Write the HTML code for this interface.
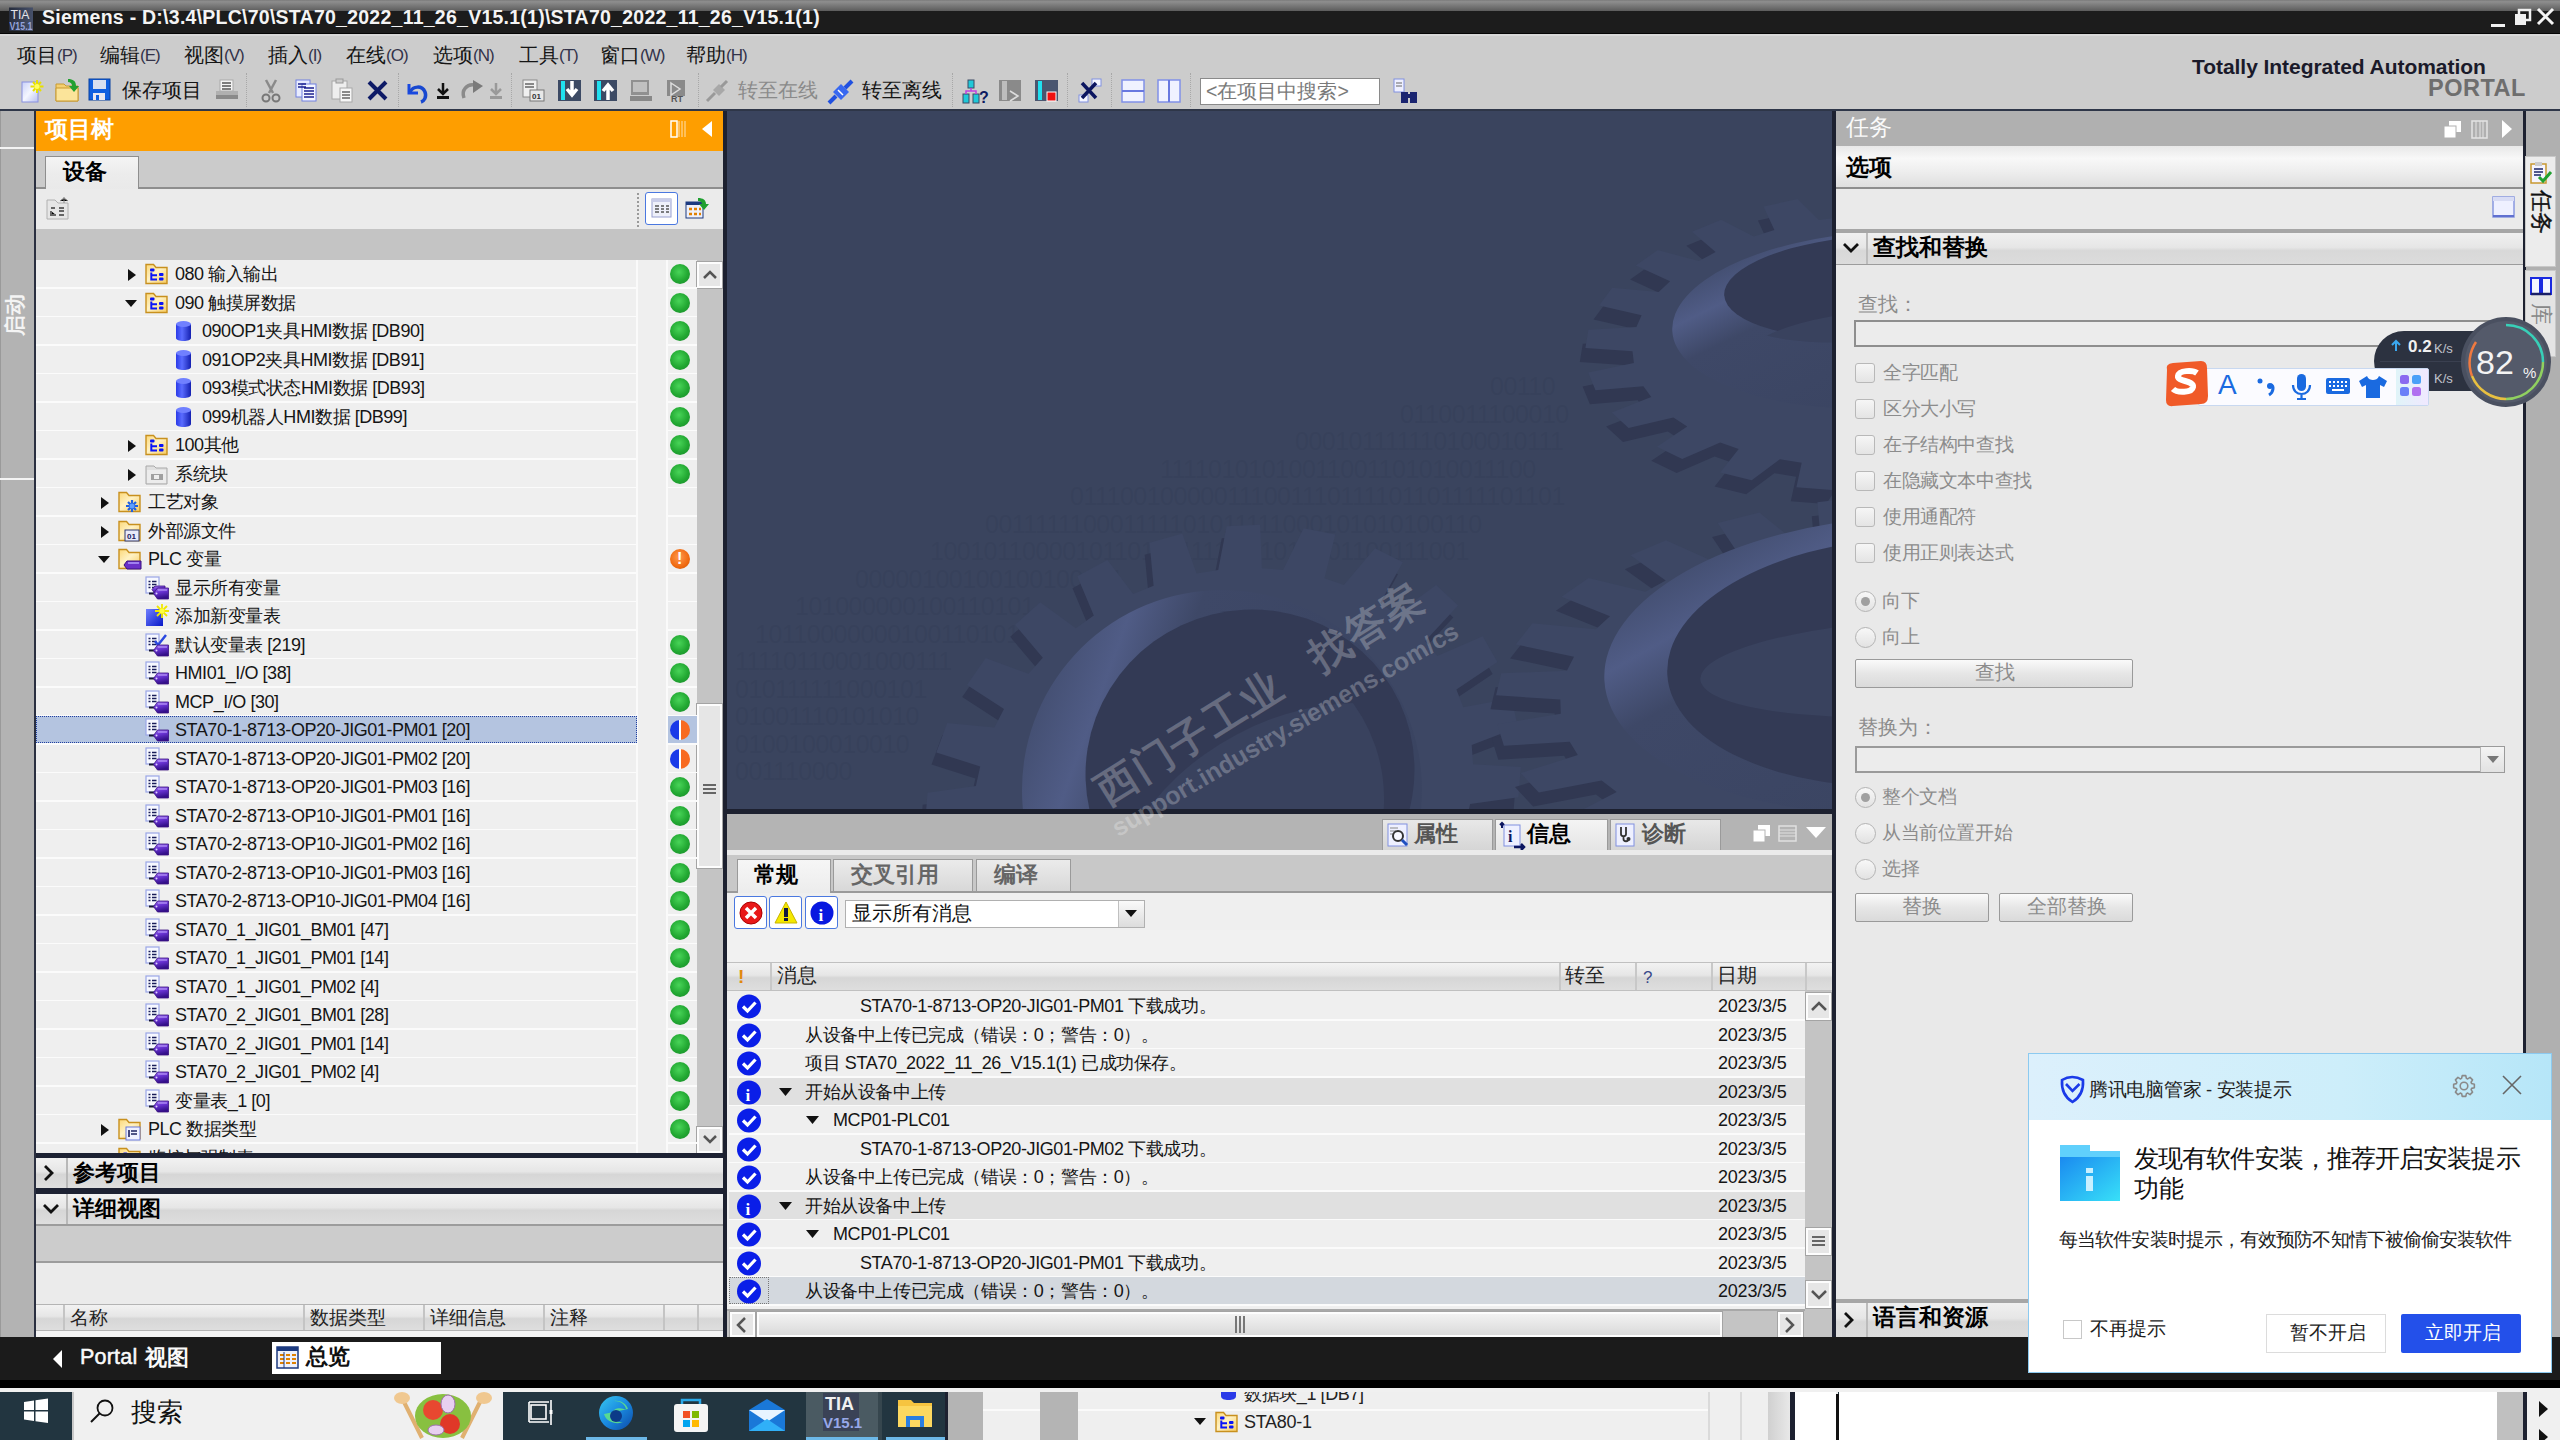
<!DOCTYPE html>
<html><head><meta charset="utf-8"><style>
*{box-sizing:border-box;margin:0;padding:0}
html,body{width:2560px;height:1440px;overflow:hidden;background:#cccccc;font-family:"Liberation Sans",sans-serif;color:#000}
.a{position:absolute}
.t{position:absolute;white-space:nowrap;line-height:1}
svg{position:absolute;overflow:visible}
.sep{position:absolute;width:0;border-left:1.5px dotted #a8a8a8;top:73px;height:34px}
.mi{position:absolute;white-space:nowrap;line-height:1;font-size:20px;color:#151515;top:45px}
.mi i{font-style:normal;color:#33334a;font-size:17px;letter-spacing:-1px;position:relative;top:-1px}
.row{position:absolute;left:36px;width:601px;height:28.5px}
.tt{position:absolute;font-size:19.5px;white-space:nowrap;line-height:1;color:#151515}
.dot{position:absolute;width:20px;height:20px;border-radius:50%;background:radial-gradient(circle at 45% 40%,#48d458,#22a832 55%,#16862a)}
.hdr{position:absolute;background:linear-gradient(#f2f2f2,#e6e6e6 45%,#d6d6d6 55%,#dedede)}
.cb{position:absolute;width:20px;height:20px;border:1.5px solid #b8b8b8;border-radius:3px;background:linear-gradient(#f6f6f6,#e4e4e4)}
.rb{position:absolute;width:21px;height:21px;border:1.5px solid #b4b4b4;border-radius:50%;background:linear-gradient(#f8f8f8,#e2e2e2)}
.gl{position:absolute;white-space:nowrap;line-height:1;font-size:18.5px;letter-spacing:-0.4px;color:#8c8c8c}
.btn{position:absolute;border:1.5px solid #9a9a9a;border-radius:2px;background:linear-gradient(#fafafa,#e6e6e6 50%,#dadada);}
.msg{position:absolute;left:730px;width:1075px;height:28.5px}
.mt{position:absolute;font-size:19.5px;white-space:nowrap;line-height:1;color:#151515}
.chk{position:absolute;left:737px;width:24px;height:24px;border-radius:50%;background:radial-gradient(circle at 40% 35%,#3a5cff,#0a1ee0 60%,#0812a8)}
.date{position:absolute;left:1718px;font-size:19.5px;line-height:1;color:#151515}
</style></head><body>
<div class="a" style="left:0px;top:0px;width:2560px;height:11px;background:linear-gradient(#7a7a7a,#8e8e8e 15%,#5c5c5c);"></div>
<div class="a" style="left:0px;top:11px;width:2560px;height:23px;background:#1c1c1c;"></div>
<div class="a" style="left:0px;top:33px;width:2560px;height:1px;background:#050505;"></div>
<svg style="left:9px;top:7px" width="24" height="24"><defs><linearGradient id="tiag" x1="0" y1="0" x2="1" y2="0"><stop offset="0" stop-color="#262c3c"/><stop offset="1" stop-color="#46506a"/></linearGradient></defs><rect x="0" y="0.5" width="24" height="23.5" fill="url(#tiag)"/><text x="1.5" y="12" font-size="12.5" fill="#e4e4e8" font-family="Liberation Sans" textLength="19" lengthAdjust="spacingAndGlyphs">TIA</text><text x="0.5" y="22.5" font-size="11" font-weight="bold" fill="#96a4dc" font-family="Liberation Sans" textLength="23" lengthAdjust="spacingAndGlyphs">V15.1</text></svg>
<div class="t" style="left:42px;top:8px;font-size:19.5px;color:#f4f4f4;font-weight:bold;letter-spacing:0.25px">Siemens - D:\3.4\PLC\70\STA70_2022_11_26_V15.1(1)\STA70_2022_11_26_V15.1(1)</div>
<div class="a" style="left:2491px;top:24px;width:14px;height:3px;background:#f0f0f0;"></div>
<svg style="left:2514px;top:9px" width="18" height="18"><rect x="5" y="1" width="11" height="10" fill="none" stroke="#f0f0f0" stroke-width="2.5"/><rect x="1" y="5" width="11" height="11" fill="#f0f0f0"/></svg>
<svg style="left:2537px;top:8px" width="18" height="18"><path d="M1 1L16 16M16 1L1 16" stroke="#f4f4f4" stroke-width="3"/></svg>
<div class="a" style="left:0px;top:34px;width:2560px;height:75px;background:#cccccc;"></div>
<div class="a" style="left:0px;top:34px;width:2560px;height:2px;background:#d8d8d8;"></div>
<div class="a" style="left:0px;top:109px;width:2560px;height:2px;background:#2e3648;"></div>
<div class="mi" style="left:17px">项目<i>(P)</i></div>
<div class="mi" style="left:100px">编辑<i>(E)</i></div>
<div class="mi" style="left:184px">视图<i>(V)</i></div>
<div class="mi" style="left:268px">插入<i>(I)</i></div>
<div class="mi" style="left:346px">在线<i>(O)</i></div>
<div class="mi" style="left:433px">选项<i>(N)</i></div>
<div class="mi" style="left:519px">工具<i>(T)</i></div>
<div class="mi" style="left:600px">窗口<i>(W)</i></div>
<div class="mi" style="left:686px">帮助<i>(H)</i></div>
<div class="sep" style="left:246px"></div>
<div class="sep" style="left:398px"></div>
<div class="sep" style="left:511px"></div>
<div class="sep" style="left:698px"></div>
<div class="sep" style="left:952px"></div>
<div class="sep" style="left:1067px"></div>
<div class="sep" style="left:1111px"></div>
<div class="sep" style="left:1190px"></div>
<svg style="left:20px;top:78px" width="26" height="26" viewBox="0 0 26 26"><defs><linearGradient id="pg" x1="0" y1="0" x2="1" y2="1"><stop offset="0" stop-color="#c8d0f8"/><stop offset="0.5" stop-color="#f4f6ff"/><stop offset="1" stop-color="#b8c0f0"/></linearGradient></defs><rect x="2" y="4" width="16" height="20" fill="url(#pg)" stroke="#8890e0" stroke-width="1"/><g stroke="#e8e000" stroke-width="2"><path d="M17 2v13M10.5 8.5h13M13 4l8 9M21 4l-8 9"/></g><circle cx="17" cy="8.5" r="2.5" fill="#ffff60"/></svg>
<svg style="left:55px;top:78px" width="26" height="26" viewBox="0 0 26 26"><path d="M1 6h8l2 2h12v15H1z" fill="#f4d070" stroke="#c89a30"/><path d="M1 10h22v13H1z" fill="#fbe49a" stroke="#c89a30"/><path d="M13 1c5 0 8 2 8 7h3l-5 6-5-6h3c0-3-2-4-4-4z" fill="#22a030"/></svg>
<svg style="left:88px;top:78px" width="24" height="24" viewBox="0 0 24 24"><rect x="1" y="1" width="21" height="21" fill="#1060e0" stroke="#0840a0"/><rect x="5" y="2" width="13" height="9" fill="#d8e0f0"/><rect x="5" y="15" width="12" height="7" fill="#e8e8f0"/><rect x="8" y="17" width="3" height="5" fill="#1060e0"/></svg>
<div class="t" style="left:122px;top:80px;font-size:20px;color:#151515;">保存项目</div>
<svg style="left:214px;top:78px" width="26" height="26" viewBox="0 0 26 26"><rect x="6" y="2" width="13" height="11" fill="#f4f4f4" stroke="#aaa"/><path d="M8 5h9M8 8h9M8 11h9" stroke="#555" stroke-width="1.5"/><path d="M2 13h22v8H2z" fill="#8a8a8a"/><rect x="2" y="13" width="22" height="4" fill="#b0b0b0"/></svg>
<svg style="left:258px;top:78px" width="26" height="26" viewBox="0 0 26 26"><path d="M8 2l7 13M18 2l-7 13" stroke="#8a8a8a" stroke-width="2.5"/><circle cx="8" cy="20" r="3.5" fill="none" stroke="#777" stroke-width="2"/><circle cx="18" cy="20" r="3.5" fill="none" stroke="#777" stroke-width="2"/></svg>
<svg style="left:294px;top:78px" width="26" height="26" viewBox="0 0 26 26"><rect x="2" y="2" width="14" height="17" fill="#e8ecff" stroke="#7080e0"/><rect x="8" y="6" width="14" height="17" fill="#f4f6ff" stroke="#7080e0"/><path d="M4 6h8M4 9h8M10 10h10M10 13h10M10 16h10M10 19h10" stroke="#1a2090" stroke-width="1.5"/></svg>
<svg style="left:330px;top:78px" width="26" height="26" viewBox="0 0 26 26"><rect x="2" y="3" width="15" height="18" fill="#eeeeee" stroke="#a8a8a8"/><rect x="6" y="1" width="7" height="4" fill="#ccc" stroke="#999"/><rect x="10" y="10" width="12" height="14" fill="#f6f6f6" stroke="#a8a8a8"/><path d="M12 14h8M12 17h8M12 20h8" stroke="#666" stroke-width="1.5"/></svg>
<svg style="left:366px;top:78px" width="24" height="24" viewBox="0 0 24 24"><path d="M3 4L20 21M20 4L3 21" stroke="#0d1a66" stroke-width="4"/></svg>
<svg style="left:404px;top:78px" width="28" height="28" viewBox="0 0 28 28"><path d="M5 6v9h9" fill="none" stroke="#1848e0" stroke-width="3"/><path d="M6 14c3-6 12-7 15 0c2 5-1 9-4 10" fill="none" stroke="#1848d0" stroke-width="3.5"/></svg>
<svg style="left:436px;top:82px" width="14" height="20" viewBox="0 0 14 20"><path d="M7 1v10M2 7l5 5 5-5" stroke="#111" stroke-width="2.5" fill="none"/><rect x="1" y="14" width="12" height="3" fill="#111"/></svg>
<svg style="left:460px;top:78px" width="26" height="26" viewBox="0 0 26 26"><path d="M4 20c-3-8 3-14 10-13" fill="none" stroke="#8a8a8a" stroke-width="3.5"/><path d="M13 2l10 6-10 7z" fill="#7a7a7a"/></svg>
<svg style="left:489px;top:82px" width="14" height="20" viewBox="0 0 14 20"><path d="M7 1v10M2 7l5 5 5-5" stroke="#999" stroke-width="2.5" fill="none"/><rect x="1" y="14" width="12" height="3" fill="#999"/></svg>
<svg style="left:521px;top:78px" width="26" height="26" viewBox="0 0 26 26"><rect x="2" y="2" width="14" height="17" fill="#f0f0f0" stroke="#8a8a8a"/><path d="M4 6h9M4 9h9" stroke="#666" stroke-width="1.5"/><rect x="9" y="12" width="14" height="11" fill="#e8e8e8" stroke="#777"/><text x="11" y="21" font-size="8" font-weight="bold" fill="#333">01</text></svg>
<svg style="left:557px;top:78px" width="26" height="26" viewBox="0 0 26 26"><rect x="1" y="2" width="23" height="21" fill="#3c4a64"/><rect x="4" y="3" width="4" height="19" fill="#20e0f0"/><path d="M15 3v12M10 11l5 6 5-6" stroke="#fff" stroke-width="3.5" fill="none"/></svg>
<svg style="left:593px;top:78px" width="26" height="26" viewBox="0 0 26 26"><rect x="1" y="2" width="23" height="21" fill="#3c4a64"/><rect x="4" y="3" width="4" height="19" fill="#20e0f0"/><path d="M15 22V9M10 13l5-6 5 6" stroke="#fff" stroke-width="3.5" fill="none"/></svg>
<svg style="left:629px;top:78px" width="26" height="26" viewBox="0 0 26 26"><rect x="2" y="2" width="18" height="15" fill="#909090"/><rect x="4" y="4" width="14" height="10" fill="#c0c0c0"/><rect x="1" y="18" width="22" height="5" fill="#888"/></svg>
<svg style="left:665px;top:78px" width="26" height="26" viewBox="0 0 26 26"><rect x="2" y="2" width="18" height="16" fill="#8a8a8a"/><path d="M6 5l9 6-9 6z" fill="none" stroke="#ddd" stroke-width="1.5"/><text x="6" y="24" font-size="9" font-weight="bold" fill="#555">RT</text></svg>
<svg style="left:704px;top:78px" width="26" height="26" viewBox="0 0 26 26"><path d="M3 23l8-8" stroke="#999" stroke-width="3"/><path d="M9 12l6-6 6 6-6 6z" fill="#a8a8a8"/><path d="M17 9l6-6" stroke="#999" stroke-width="3"/></svg>
<div class="t" style="left:738px;top:80px;font-size:20px;color:#8a8a8a;">转至在线</div>
<svg style="left:827px;top:78px" width="28" height="28" viewBox="0 0 28 28"><path d="M2 25l7-7" stroke="#2050e0" stroke-width="4"/><path d="M6 14l8-8 8 8-8 8z" fill="#3868f0"/><path d="M18 10l7-7" stroke="#2050e0" stroke-width="4"/><path d="M11 12l5 5" stroke="#fff" stroke-width="1.5"/></svg>
<div class="t" style="left:862px;top:80px;font-size:20px;color:#151515;">转至离线</div>
<svg style="left:962px;top:79px" width="28" height="26" viewBox="0 0 28 26"><rect x="6" y="1" width="6" height="8" fill="#20c8d8" stroke="#3c4a64"/><rect x="1" y="15" width="6" height="9" fill="#20c8d8" stroke="#3c4a64"/><rect x="11" y="15" width="6" height="9" fill="#20c8d8" stroke="#3c4a64"/><path d="M9 9v3M4 15v-3h10v3" stroke="#c040e0" stroke-width="1.5" fill="none"/><text x="17" y="24" font-size="16" font-weight="bold" fill="#0c1a60">?</text></svg>
<svg style="left:998px;top:78px" width="26" height="26" viewBox="0 0 26 26"><rect x="1" y="2" width="22" height="21" fill="#8a8a8a"/><rect x="4" y="3" width="5" height="19" fill="#bdbdbd"/><path d="M12 13l8 5-8 5" fill="none" stroke="#ddd" stroke-width="1.5"/></svg>
<svg style="left:1034px;top:78px" width="26" height="26" viewBox="0 0 26 26"><rect x="1" y="2" width="23" height="21" fill="#4a5670"/><rect x="4" y="3" width="4" height="19" fill="#20e0f0"/><rect x="13" y="14" width="9" height="9" fill="#f01010" stroke="#fff"/></svg>
<svg style="left:1078px;top:78px" width="26" height="26" viewBox="0 0 26 26"><rect x="14" y="1" width="9" height="7" fill="#f4f6ff" stroke="#8090e0"/><rect x="1" y="17" width="9" height="7" fill="#f4f6ff" stroke="#8090e0"/><path d="M4 5l14 15M18 5L4 20" stroke="#0c1660" stroke-width="3.5"/></svg>
<svg style="left:1121px;top:79px" width="26" height="24" viewBox="0 0 26 24"><rect x="1" y="1" width="22" height="22" fill="#f0f2ff" stroke="#8090e8" stroke-width="1.5"/><path d="M1 12h22" stroke="#6878e0" stroke-width="2"/></svg>
<svg style="left:1157px;top:79px" width="26" height="24" viewBox="0 0 26 24"><rect x="1" y="1" width="22" height="22" fill="#f0f2ff" stroke="#8090e8" stroke-width="1.5"/><path d="M12 1v22" stroke="#6878e0" stroke-width="2"/></svg>
<div class="a" style="left:1200px;top:78px;width:180px;height:27px;background:#ffffff;border:1.5px solid #8a8a8a"></div>
<div class="t" style="left:1206px;top:82px;font-size:19.5px;color:#7a7a7a;">&lt;在项目中搜索&gt;</div>
<svg style="left:1393px;top:78px" width="28" height="28" viewBox="0 0 28 28"><rect x="1" y="1" width="10" height="13" fill="#eef0ff" stroke="#8090e0"/><path d="M3 5h6M3 8h6" stroke="#666"/><rect x="8" y="14" width="7" height="11" fill="#1a2470"/><rect x="17" y="14" width="7" height="11" fill="#1a2470"/><rect x="13" y="16" width="6" height="4" fill="#1a2470"/></svg>
<div class="t" style="left:2192px;top:56px;font-size:21px;color:#1a1a2a;font-weight:bold;letter-spacing:-0.05px">Totally Integrated Automation</div>
<div class="t" style="left:2428px;top:77px;font-size:23.5px;color:#6e6e6e;font-weight:bold;letter-spacing:0.5px">PORTAL</div>
<div class="a" style="left:0px;top:111px;width:34px;height:1226px;background:#b3b3b3;"></div>
<div class="a" style="left:0px;top:111px;width:1px;height:1226px;background:#9a9a9a;"></div>
<div class="a" style="left:34px;top:111px;width:2px;height:1226px;background:#2a2f40;"></div>
<div class="a" style="left:0px;top:147px;width:34px;height:2px;background:#f4f4f4;"></div>
<div class="a" style="left:0px;top:478px;width:34px;height:2px;background:#f4f4f4;"></div>
<div class="t" style="left:-9px;top:305px;font-size:21px;font-weight:bold;color:#f4f4f4;transform:rotate(-90deg);transform-origin:23px 10px;width:46px;height:21px;text-align:center">启动</div>
<div class="a" style="left:36px;top:111px;width:687px;height:40px;background:#fe9e00;"></div>
<div class="t" style="left:45px;top:119px;font-size:22.5px;color:#ffffff;font-weight:bold">项目树</div>
<svg style="left:670px;top:120px" width="16" height="18" viewBox="0 0 16 18"><rect x="1" y="1" width="6" height="16" fill="none" stroke="#fff" stroke-width="1.5"/><path d="M9 1v16M12 1v16M15 1v16" stroke="#ffe0b0" stroke-width="1"/></svg>
<svg style="left:700px;top:120px" width="14" height="18" viewBox="0 0 14 18"><path d="M12 1L2 9l10 8z" fill="#fff"/></svg>
<div class="a" style="left:36px;top:151px;width:687px;height:37px;background:#cbcbcb;"></div>
<div class="a" style="left:36px;top:187px;width:687px;height:2px;background:#8e8e8e;"></div>
<div class="a" style="left:45px;top:156px;width:94px;height:34px;border:1.5px solid #8e8e8e;border-bottom:none;background:linear-gradient(#f4f4f4,#ececec 50%,#e9e9e9)"></div>
<div class="t" style="left:63px;top:161px;font-size:22px;color:#000;font-weight:bold">设备</div>
<div class="a" style="left:36px;top:189px;width:687px;height:40px;background:#ebebeb;"></div>
<svg style="left:46px;top:196px" width="26" height="26" viewBox="0 0 26 26"><path d="M1 4h8l3 3h10v16H1z" fill="#e6e6e6" stroke="#b0b0b0"/><path d="M5 12h4M5 15v4h5M13 19h5M13 12h5M13 15h5" stroke="#666" stroke-width="2"/><path d="M18 1v6M14 5l4-3 4 3" stroke="#888" stroke-width="1"/></svg>
<div class="a" style="left:637px;top:193px;width:0;height:34px;border-left:2px dotted #9a9a9a"></div>
<div class="a" style="left:645px;top:192px;width:33px;height:33px;border:1.5px solid #4a78e0;border-radius:3px;background:#fff"></div>
<svg style="left:651px;top:198px" width="22" height="22" viewBox="0 0 22 22"><rect x="1" y="1" width="19" height="18" fill="#eef0fa" stroke="#98a0d0"/><rect x="1" y="1" width="19" height="3" fill="#c8cce8"/><path d="M4 8h4M10 8h3M15 8h3M4 11h4M10 11h3M15 11h3M4 14h4M10 14h3M15 14h3" stroke="#555" stroke-width="1.6"/></svg>
<svg style="left:685px;top:196px" width="26" height="26" viewBox="0 0 26 26"><rect x="1" y="6" width="17" height="16" fill="#eef0fa" stroke="#1c3a80"/><rect x="1" y="6" width="17" height="3" fill="#1c3a80"/><path d="M4 13h3M9 13h3M14 13h2M4 18h3M9 18h3M14 18h2" stroke="#e08000" stroke-width="2.5"/><path d="M13 2c5 0 8 2 8 6h3l-5 6-5-6h3c0-2-2-3-4-3z" fill="#20a030"/></svg>
<div class="a" style="left:36px;top:229px;width:687px;height:31px;background:#c4c4c4;"></div>
<div class="a" style="left:36px;top:260px;width:661px;height:893px;background:#efefef;"></div>
<div class="a" style="left:636px;top:260px;width:2px;height:893px;background:#fafafa;"></div>
<div class="a" style="left:666px;top:260px;width:2px;height:893px;background:#fafafa;"></div>
<div class="a" style="left:697px;top:260px;width:26px;height:893px;background:#c4c4c4;"></div>
<div class="a" style="left:697px;top:262px;width:25px;height:26px;border:2px solid #fdfdfd;box-shadow:0 0 0 1px #a4a4a4;background:#e6e6e6"></div>
<svg style="left:702px;top:268px" width="16" height="12" viewBox="0 0 16 12"><path d="M2 10l6-6 6 6" fill="none" stroke="#555" stroke-width="2.5"/></svg>
<div class="a" style="left:697px;top:704px;width:25px;height:164px;border:2px solid #fdfdfd;box-shadow:0 0 0 1px #a4a4a4;background:#e6e6e6"></div>
<div class="a" style="left:703px;top:784px;width:13px;height:2px;background:#666;"></div>
<div class="a" style="left:703px;top:788px;width:13px;height:2px;background:#666;"></div>
<div class="a" style="left:703px;top:792px;width:13px;height:2px;background:#666;"></div>
<div class="a" style="left:697px;top:1127px;width:25px;height:26px;border:2px solid #fdfdfd;box-shadow:0 0 0 1px #a4a4a4;background:#e6e6e6"></div>
<svg style="left:702px;top:1134px" width="16" height="12" viewBox="0 0 16 12"><path d="M2 2l6 6 6-6" fill="none" stroke="#555" stroke-width="2.5"/></svg>
<div class="a" style="left:36px;top:260px;width:661px;height:893px;overflow:hidden">
<div class="a" style="left:0;top:27.0px;width:600px;height:1.5px;background:#fbfbfb"></div>
<div class="a" style="left:632px;top:27.0px;width:29px;height:1.5px;background:#fbfbfb"></div>
<svg style="left:91px;top:8.0px" width="10" height="14"><path d="M1 1l8 6-8 6z" fill="#111"/></svg>
<svg style="left:109px;top:3.0px" width="24" height="22"><defs><linearGradient id="fdg" x1="0" y1="0" x2="1" y2="1"><stop offset="0" stop-color="#fcd878"/><stop offset="0.45" stop-color="#fff2c4"/><stop offset="1" stop-color="#f8cc60"/></linearGradient></defs><path d="M1 1.5h7.5l2.5 3h11v16H1z" fill="url(#fdg)" stroke="#c8901e" stroke-width="1.4"/><rect x="5" y="5.5" width="4.5" height="3" rx="1" fill="#0a14f8"/><path d="M6.3 9.5V16.5H12M6.3 12.3H12" fill="none" stroke="#0a14f8" stroke-width="2"/><rect x="14" y="10" width="4.5" height="3" rx="1" fill="#0a14f8"/><rect x="14" y="14.5" width="4.5" height="3" rx="1" fill="#0a14f8"/></svg>
<div class="tt" style="left:139px;top:5.0px;font-size:18px;letter-spacing:-0.45px">080 输入输出</div>
<div class="dot" style="left:634px;top:4.0px"></div>
<div class="a" style="left:0;top:55.5px;width:600px;height:1.5px;background:#fbfbfb"></div>
<div class="a" style="left:632px;top:55.5px;width:29px;height:1.5px;background:#fbfbfb"></div>
<svg style="left:88px;top:38.5px" width="14" height="10"><path d="M1 1h12l-6 7z" fill="#111"/></svg>
<svg style="left:109px;top:31.5px" width="24" height="22"><defs><linearGradient id="fdg" x1="0" y1="0" x2="1" y2="1"><stop offset="0" stop-color="#fcd878"/><stop offset="0.45" stop-color="#fff2c4"/><stop offset="1" stop-color="#f8cc60"/></linearGradient></defs><path d="M1 1.5h7.5l2.5 3h11v16H1z" fill="url(#fdg)" stroke="#c8901e" stroke-width="1.4"/><rect x="5" y="5.5" width="4.5" height="3" rx="1" fill="#0a14f8"/><path d="M6.3 9.5V16.5H12M6.3 12.3H12" fill="none" stroke="#0a14f8" stroke-width="2"/><rect x="14" y="10" width="4.5" height="3" rx="1" fill="#0a14f8"/><rect x="14" y="14.5" width="4.5" height="3" rx="1" fill="#0a14f8"/></svg>
<div class="tt" style="left:139px;top:33.5px;font-size:18px;letter-spacing:-0.45px">090 触摸屏数据</div>
<div class="dot" style="left:634px;top:32.5px"></div>
<div class="a" style="left:0;top:84.0px;width:600px;height:1.5px;background:#fbfbfb"></div>
<div class="a" style="left:632px;top:84.0px;width:29px;height:1.5px;background:#fbfbfb"></div>
<svg style="left:139px;top:60.0px" width="18" height="22"><defs><linearGradient id="dbg" x1="0" x2="1"><stop offset="0" stop-color="#2a3ae8"/><stop offset="0.4" stop-color="#5a6cff"/><stop offset="1" stop-color="#1420b0"/></linearGradient></defs><path d="M1 4v14c0 2 3.5 3 7.5 3s7.5-1 7.5-3V4z" fill="url(#dbg)"/><ellipse cx="8.5" cy="4" rx="7.5" ry="3" fill="#7080ff"/></svg>
<div class="tt" style="left:166px;top:62.0px;font-size:18px;letter-spacing:-0.45px">090OP1夹具HMI数据 [DB90]</div>
<div class="dot" style="left:634px;top:61.0px"></div>
<div class="a" style="left:0;top:112.5px;width:600px;height:1.5px;background:#fbfbfb"></div>
<div class="a" style="left:632px;top:112.5px;width:29px;height:1.5px;background:#fbfbfb"></div>
<svg style="left:139px;top:88.5px" width="18" height="22"><defs><linearGradient id="dbg" x1="0" x2="1"><stop offset="0" stop-color="#2a3ae8"/><stop offset="0.4" stop-color="#5a6cff"/><stop offset="1" stop-color="#1420b0"/></linearGradient></defs><path d="M1 4v14c0 2 3.5 3 7.5 3s7.5-1 7.5-3V4z" fill="url(#dbg)"/><ellipse cx="8.5" cy="4" rx="7.5" ry="3" fill="#7080ff"/></svg>
<div class="tt" style="left:166px;top:90.5px;font-size:18px;letter-spacing:-0.45px">091OP2夹具HMI数据 [DB91]</div>
<div class="dot" style="left:634px;top:89.5px"></div>
<div class="a" style="left:0;top:141.0px;width:600px;height:1.5px;background:#fbfbfb"></div>
<div class="a" style="left:632px;top:141.0px;width:29px;height:1.5px;background:#fbfbfb"></div>
<svg style="left:139px;top:117.0px" width="18" height="22"><defs><linearGradient id="dbg" x1="0" x2="1"><stop offset="0" stop-color="#2a3ae8"/><stop offset="0.4" stop-color="#5a6cff"/><stop offset="1" stop-color="#1420b0"/></linearGradient></defs><path d="M1 4v14c0 2 3.5 3 7.5 3s7.5-1 7.5-3V4z" fill="url(#dbg)"/><ellipse cx="8.5" cy="4" rx="7.5" ry="3" fill="#7080ff"/></svg>
<div class="tt" style="left:166px;top:119.0px;font-size:18px;letter-spacing:-0.45px">093模式状态HMI数据 [DB93]</div>
<div class="dot" style="left:634px;top:118.0px"></div>
<div class="a" style="left:0;top:169.5px;width:600px;height:1.5px;background:#fbfbfb"></div>
<div class="a" style="left:632px;top:169.5px;width:29px;height:1.5px;background:#fbfbfb"></div>
<svg style="left:139px;top:145.5px" width="18" height="22"><defs><linearGradient id="dbg" x1="0" x2="1"><stop offset="0" stop-color="#2a3ae8"/><stop offset="0.4" stop-color="#5a6cff"/><stop offset="1" stop-color="#1420b0"/></linearGradient></defs><path d="M1 4v14c0 2 3.5 3 7.5 3s7.5-1 7.5-3V4z" fill="url(#dbg)"/><ellipse cx="8.5" cy="4" rx="7.5" ry="3" fill="#7080ff"/></svg>
<div class="tt" style="left:166px;top:147.5px;font-size:18px;letter-spacing:-0.45px">099机器人HMI数据 [DB99]</div>
<div class="dot" style="left:634px;top:146.5px"></div>
<div class="a" style="left:0;top:198.0px;width:600px;height:1.5px;background:#fbfbfb"></div>
<div class="a" style="left:632px;top:198.0px;width:29px;height:1.5px;background:#fbfbfb"></div>
<svg style="left:91px;top:179.0px" width="10" height="14"><path d="M1 1l8 6-8 6z" fill="#111"/></svg>
<svg style="left:109px;top:174.0px" width="24" height="22"><defs><linearGradient id="fdg" x1="0" y1="0" x2="1" y2="1"><stop offset="0" stop-color="#fcd878"/><stop offset="0.45" stop-color="#fff2c4"/><stop offset="1" stop-color="#f8cc60"/></linearGradient></defs><path d="M1 1.5h7.5l2.5 3h11v16H1z" fill="url(#fdg)" stroke="#c8901e" stroke-width="1.4"/><rect x="5" y="5.5" width="4.5" height="3" rx="1" fill="#0a14f8"/><path d="M6.3 9.5V16.5H12M6.3 12.3H12" fill="none" stroke="#0a14f8" stroke-width="2"/><rect x="14" y="10" width="4.5" height="3" rx="1" fill="#0a14f8"/><rect x="14" y="14.5" width="4.5" height="3" rx="1" fill="#0a14f8"/></svg>
<div class="tt" style="left:139px;top:176.0px;font-size:18px;letter-spacing:-0.45px">100其他</div>
<div class="dot" style="left:634px;top:175.0px"></div>
<div class="a" style="left:0;top:226.5px;width:600px;height:1.5px;background:#fbfbfb"></div>
<div class="a" style="left:632px;top:226.5px;width:29px;height:1.5px;background:#fbfbfb"></div>
<svg style="left:91px;top:207.5px" width="10" height="14"><path d="M1 1l8 6-8 6z" fill="#111"/></svg>
<svg style="left:109px;top:202.5px" width="24" height="22"><path d="M1 3h8l2 2h11v16H1z" fill="#e0e0e0" stroke="#a8a8a8"/><rect x="2" y="7" width="19" height="13" fill="#ececec"/><rect x="6" y="11" width="12" height="6" fill="#a0a0a0"/><rect x="9" y="12" width="5" height="4" fill="#eee"/></svg>
<div class="tt" style="left:139px;top:204.5px;font-size:18px;letter-spacing:-0.45px">系统块</div>
<div class="dot" style="left:634px;top:203.5px"></div>
<div class="a" style="left:0;top:255.0px;width:600px;height:1.5px;background:#fbfbfb"></div>
<div class="a" style="left:632px;top:255.0px;width:29px;height:1.5px;background:#fbfbfb"></div>
<svg style="left:64px;top:236.0px" width="10" height="14"><path d="M1 1l8 6-8 6z" fill="#111"/></svg>
<svg style="left:82px;top:231.0px" width="24" height="22"><defs><linearGradient id="fdg" x1="0" y1="0" x2="1" y2="1"><stop offset="0" stop-color="#fcd878"/><stop offset="0.45" stop-color="#fff2c4"/><stop offset="1" stop-color="#f8cc60"/></linearGradient></defs><path d="M1 1.5h7.5l2.5 3h11v16H1z" fill="url(#fdg)" stroke="#c8901e" stroke-width="1.4"/><g stroke="#2060e0" stroke-width="2.2"><path d="M14 9v12M8 15h12M10 11l8 8M18 11l-8 8"/></g><circle cx="14" cy="15" r="2.5" fill="#60a0ff"/></svg>
<div class="tt" style="left:112px;top:233.0px;font-size:18px;letter-spacing:-0.45px">工艺对象</div>
<div class="a" style="left:0;top:283.5px;width:600px;height:1.5px;background:#fbfbfb"></div>
<div class="a" style="left:632px;top:283.5px;width:29px;height:1.5px;background:#fbfbfb"></div>
<svg style="left:64px;top:264.5px" width="10" height="14"><path d="M1 1l8 6-8 6z" fill="#111"/></svg>
<svg style="left:82px;top:259.5px" width="24" height="22"><defs><linearGradient id="fdg" x1="0" y1="0" x2="1" y2="1"><stop offset="0" stop-color="#fcd878"/><stop offset="0.45" stop-color="#fff2c4"/><stop offset="1" stop-color="#f8cc60"/></linearGradient></defs><path d="M1 1.5h7.5l2.5 3h11v16H1z" fill="url(#fdg)" stroke="#c8901e" stroke-width="1.4"/><rect x="7" y="10" width="14" height="11" fill="#e8eaf8" stroke="#303a70"/><text x="9" y="19" font-size="8" font-weight="bold" fill="#1a2060" font-family="Liberation Sans">01</text></svg>
<div class="tt" style="left:112px;top:261.5px;font-size:18px;letter-spacing:-0.45px">外部源文件</div>
<div class="a" style="left:0;top:312.0px;width:600px;height:1.5px;background:#fbfbfb"></div>
<div class="a" style="left:632px;top:312.0px;width:29px;height:1.5px;background:#fbfbfb"></div>
<svg style="left:61px;top:295.0px" width="14" height="10"><path d="M1 1h12l-6 7z" fill="#111"/></svg>
<svg style="left:82px;top:288.0px" width="26" height="22"><defs><linearGradient id="fdg" x1="0" y1="0" x2="1" y2="1"><stop offset="0" stop-color="#fcd878"/><stop offset="0.45" stop-color="#fff2c4"/><stop offset="1" stop-color="#f8cc60"/></linearGradient></defs><path d="M1 1.5h7.5l2.5 3h11v16H1z" fill="url(#fdg)" stroke="#c8901e" stroke-width="1.4"/><path d="M9 13h14v8H9l-3-4z" fill="#6a30c8" stroke="#3a1080"/><rect x="10" y="14" width="11" height="2" fill="#a080f0"/></svg>
<div class="tt" style="left:112px;top:290.0px;font-size:18px;letter-spacing:-0.45px">PLC 变量</div>
<div class="dot" style="left:634px;top:289.0px;background:radial-gradient(circle at 45% 40%,#ff9a50,#f06a10 60%,#c85000)"></div><div class="t" style="left:641px;top:291.0px;font-size:16px;font-weight:bold;color:#fff">!</div>
<div class="a" style="left:0;top:340.5px;width:600px;height:1.5px;background:#fbfbfb"></div>
<div class="a" style="left:632px;top:340.5px;width:29px;height:1.5px;background:#fbfbfb"></div>
<svg style="left:109px;top:315.5px" width="26" height="24"><defs><linearGradient id="tg" x1="0" y1="0" x2="0.3" y2="1"><stop offset="0" stop-color="#a47af4"/><stop offset="0.45" stop-color="#6a34d4"/><stop offset="1" stop-color="#34108a"/></linearGradient></defs><rect x="1" y="1" width="13" height="16" fill="#f6f8ff" stroke="#9aa6e6" stroke-width="1.2"/><path d="M3.5 5.5h2M7 5.5h4.5M3.5 8.5h2M7 8.5h4.5M3.5 11.5h2M7 11.5h4.5" stroke="#1a1e5a" stroke-width="1.6"/><path d="M7 13.5L10 10h10v8H10z" fill="url(#tg)" stroke="#3a1080" stroke-width="0.8"/><path d="M4 17.5h6" stroke="#151530" stroke-width="2"/><path d="M8.5 17.5L12.5 12H23.5V23H12.5z" fill="url(#tg)" stroke="#3a1080" stroke-width="0.8"/><path d="M13 14h9" stroke="#b898f8" stroke-width="1.2"/><circle cx="11.5" cy="17.5" r="1" fill="#e0d0ff"/></svg>
<div class="tt" style="left:139px;top:318.5px;font-size:18px;letter-spacing:-0.45px">显示所有变量</div>
<div class="a" style="left:0;top:369.0px;width:600px;height:1.5px;background:#fbfbfb"></div>
<div class="a" style="left:632px;top:369.0px;width:29px;height:1.5px;background:#fbfbfb"></div>
<svg style="left:109px;top:344.0px" width="26" height="24"><defs><linearGradient id="ag" x1="0" y1="0" x2="1" y2="1"><stop offset="0" stop-color="#7080ff"/><stop offset="1" stop-color="#0818c8"/></linearGradient></defs><rect x="1" y="5" width="17" height="17" fill="url(#ag)"/><g stroke="#f0e800" stroke-width="1.8"><path d="M17 0v14M10 7h14M12 2l10 10M22 2L12 12"/></g><circle cx="17" cy="7" r="2.5" fill="#ffff40"/></svg>
<div class="tt" style="left:139px;top:347.0px;font-size:18px;letter-spacing:-0.45px">添加新变量表</div>
<div class="a" style="left:0;top:397.5px;width:600px;height:1.5px;background:#fbfbfb"></div>
<div class="a" style="left:632px;top:397.5px;width:29px;height:1.5px;background:#fbfbfb"></div>
<svg style="left:109px;top:372.5px" width="26" height="24"><defs><linearGradient id="tg" x1="0" y1="0" x2="0.3" y2="1"><stop offset="0" stop-color="#a47af4"/><stop offset="0.45" stop-color="#6a34d4"/><stop offset="1" stop-color="#34108a"/></linearGradient></defs><rect x="1" y="1" width="13" height="16" fill="#f6f8ff" stroke="#9aa6e6" stroke-width="1.2"/><path d="M3.5 5.5h2M7 5.5h4.5M3.5 8.5h2M7 8.5h4.5M3.5 11.5h2M7 11.5h4.5" stroke="#1a1e5a" stroke-width="1.6"/><path d="M10 8l3 4 8-10" fill="none" stroke="#2a48e0" stroke-width="2.5"/><path d="M4 17.5h6" stroke="#151530" stroke-width="2"/><path d="M8.5 17.5L12.5 12H23.5V23H12.5z" fill="url(#tg)" stroke="#3a1080" stroke-width="0.8"/><path d="M13 14h9" stroke="#b898f8" stroke-width="1.2"/><circle cx="11.5" cy="17.5" r="1" fill="#e0d0ff"/></svg>
<div class="tt" style="left:139px;top:375.5px;font-size:18px;letter-spacing:-0.45px">默认变量表 [219]</div>
<div class="dot" style="left:634px;top:374.5px"></div>
<div class="a" style="left:0;top:426.0px;width:600px;height:1.5px;background:#fbfbfb"></div>
<div class="a" style="left:632px;top:426.0px;width:29px;height:1.5px;background:#fbfbfb"></div>
<svg style="left:109px;top:401.0px" width="26" height="24"><defs><linearGradient id="tg" x1="0" y1="0" x2="0.3" y2="1"><stop offset="0" stop-color="#a47af4"/><stop offset="0.45" stop-color="#6a34d4"/><stop offset="1" stop-color="#34108a"/></linearGradient></defs><rect x="1" y="1" width="13" height="16" fill="#f6f8ff" stroke="#9aa6e6" stroke-width="1.2"/><path d="M3.5 5.5h2M7 5.5h4.5M3.5 8.5h2M7 8.5h4.5M3.5 11.5h2M7 11.5h4.5" stroke="#1a1e5a" stroke-width="1.6"/><path d="M4 17.5h6" stroke="#151530" stroke-width="2"/><path d="M8.5 17.5L12.5 12H23.5V23H12.5z" fill="url(#tg)" stroke="#3a1080" stroke-width="0.8"/><path d="M13 14h9" stroke="#b898f8" stroke-width="1.2"/><circle cx="11.5" cy="17.5" r="1" fill="#e0d0ff"/></svg>
<div class="tt" style="left:139px;top:404.0px;font-size:18px;letter-spacing:-0.45px">HMI01_I/O [38]</div>
<div class="dot" style="left:634px;top:403.0px"></div>
<div class="a" style="left:0;top:454.5px;width:600px;height:1.5px;background:#fbfbfb"></div>
<div class="a" style="left:632px;top:454.5px;width:29px;height:1.5px;background:#fbfbfb"></div>
<svg style="left:109px;top:429.5px" width="26" height="24"><defs><linearGradient id="tg" x1="0" y1="0" x2="0.3" y2="1"><stop offset="0" stop-color="#a47af4"/><stop offset="0.45" stop-color="#6a34d4"/><stop offset="1" stop-color="#34108a"/></linearGradient></defs><rect x="1" y="1" width="13" height="16" fill="#f6f8ff" stroke="#9aa6e6" stroke-width="1.2"/><path d="M3.5 5.5h2M7 5.5h4.5M3.5 8.5h2M7 8.5h4.5M3.5 11.5h2M7 11.5h4.5" stroke="#1a1e5a" stroke-width="1.6"/><path d="M4 17.5h6" stroke="#151530" stroke-width="2"/><path d="M8.5 17.5L12.5 12H23.5V23H12.5z" fill="url(#tg)" stroke="#3a1080" stroke-width="0.8"/><path d="M13 14h9" stroke="#b898f8" stroke-width="1.2"/><circle cx="11.5" cy="17.5" r="1" fill="#e0d0ff"/></svg>
<div class="tt" style="left:139px;top:432.5px;font-size:18px;letter-spacing:-0.45px">MCP_I/O [30]</div>
<div class="dot" style="left:634px;top:431.5px"></div>
<div class="a" style="left:0;top:483.0px;width:600px;height:1.5px;background:#fbfbfb"></div>
<div class="a" style="left:632px;top:483.0px;width:29px;height:1.5px;background:#fbfbfb"></div>
<div class="a" style="left:0;top:456.0px;width:601px;height:27px;background:#b4c4e0;border:1.5px dotted #2040a0"></div>
<div class="a" style="left:632px;top:456.0px;width:29px;height:27px;background:#b4c4e0"></div>
<svg style="left:109px;top:458.0px" width="26" height="24"><defs><linearGradient id="tg" x1="0" y1="0" x2="0.3" y2="1"><stop offset="0" stop-color="#a47af4"/><stop offset="0.45" stop-color="#6a34d4"/><stop offset="1" stop-color="#34108a"/></linearGradient></defs><rect x="1" y="1" width="13" height="16" fill="#f6f8ff" stroke="#9aa6e6" stroke-width="1.2"/><path d="M3.5 5.5h2M7 5.5h4.5M3.5 8.5h2M7 8.5h4.5M3.5 11.5h2M7 11.5h4.5" stroke="#1a1e5a" stroke-width="1.6"/><path d="M4 17.5h6" stroke="#151530" stroke-width="2"/><path d="M8.5 17.5L12.5 12H23.5V23H12.5z" fill="url(#tg)" stroke="#3a1080" stroke-width="0.8"/><path d="M13 14h9" stroke="#b898f8" stroke-width="1.2"/><circle cx="11.5" cy="17.5" r="1" fill="#e0d0ff"/></svg>
<div class="tt" style="left:139px;top:461.0px;font-size:18px;letter-spacing:-0.45px">STA70-1-8713-OP20-JIG01-PM01 [20]</div>
<div class="dot" style="left:634px;top:460.0px;background:linear-gradient(90deg,#1a3ae8 50%,#f86a20 50%)"></div><div class="a" style="left:643px;top:460.0px;width:2px;height:20px;background:#fff"></div>
<div class="a" style="left:0;top:511.5px;width:600px;height:1.5px;background:#fbfbfb"></div>
<div class="a" style="left:632px;top:511.5px;width:29px;height:1.5px;background:#fbfbfb"></div>
<svg style="left:109px;top:486.5px" width="26" height="24"><defs><linearGradient id="tg" x1="0" y1="0" x2="0.3" y2="1"><stop offset="0" stop-color="#a47af4"/><stop offset="0.45" stop-color="#6a34d4"/><stop offset="1" stop-color="#34108a"/></linearGradient></defs><rect x="1" y="1" width="13" height="16" fill="#f6f8ff" stroke="#9aa6e6" stroke-width="1.2"/><path d="M3.5 5.5h2M7 5.5h4.5M3.5 8.5h2M7 8.5h4.5M3.5 11.5h2M7 11.5h4.5" stroke="#1a1e5a" stroke-width="1.6"/><path d="M4 17.5h6" stroke="#151530" stroke-width="2"/><path d="M8.5 17.5L12.5 12H23.5V23H12.5z" fill="url(#tg)" stroke="#3a1080" stroke-width="0.8"/><path d="M13 14h9" stroke="#b898f8" stroke-width="1.2"/><circle cx="11.5" cy="17.5" r="1" fill="#e0d0ff"/></svg>
<div class="tt" style="left:139px;top:489.5px;font-size:18px;letter-spacing:-0.45px">STA70-1-8713-OP20-JIG01-PM02 [20]</div>
<div class="dot" style="left:634px;top:488.5px;background:linear-gradient(90deg,#1a3ae8 50%,#f86a20 50%)"></div><div class="a" style="left:643px;top:488.5px;width:2px;height:20px;background:#fff"></div>
<div class="a" style="left:0;top:540.0px;width:600px;height:1.5px;background:#fbfbfb"></div>
<div class="a" style="left:632px;top:540.0px;width:29px;height:1.5px;background:#fbfbfb"></div>
<svg style="left:109px;top:515.0px" width="26" height="24"><defs><linearGradient id="tg" x1="0" y1="0" x2="0.3" y2="1"><stop offset="0" stop-color="#a47af4"/><stop offset="0.45" stop-color="#6a34d4"/><stop offset="1" stop-color="#34108a"/></linearGradient></defs><rect x="1" y="1" width="13" height="16" fill="#f6f8ff" stroke="#9aa6e6" stroke-width="1.2"/><path d="M3.5 5.5h2M7 5.5h4.5M3.5 8.5h2M7 8.5h4.5M3.5 11.5h2M7 11.5h4.5" stroke="#1a1e5a" stroke-width="1.6"/><path d="M4 17.5h6" stroke="#151530" stroke-width="2"/><path d="M8.5 17.5L12.5 12H23.5V23H12.5z" fill="url(#tg)" stroke="#3a1080" stroke-width="0.8"/><path d="M13 14h9" stroke="#b898f8" stroke-width="1.2"/><circle cx="11.5" cy="17.5" r="1" fill="#e0d0ff"/></svg>
<div class="tt" style="left:139px;top:518.0px;font-size:18px;letter-spacing:-0.45px">STA70-1-8713-OP20-JIG01-PM03 [16]</div>
<div class="dot" style="left:634px;top:517.0px"></div>
<div class="a" style="left:0;top:568.5px;width:600px;height:1.5px;background:#fbfbfb"></div>
<div class="a" style="left:632px;top:568.5px;width:29px;height:1.5px;background:#fbfbfb"></div>
<svg style="left:109px;top:543.5px" width="26" height="24"><defs><linearGradient id="tg" x1="0" y1="0" x2="0.3" y2="1"><stop offset="0" stop-color="#a47af4"/><stop offset="0.45" stop-color="#6a34d4"/><stop offset="1" stop-color="#34108a"/></linearGradient></defs><rect x="1" y="1" width="13" height="16" fill="#f6f8ff" stroke="#9aa6e6" stroke-width="1.2"/><path d="M3.5 5.5h2M7 5.5h4.5M3.5 8.5h2M7 8.5h4.5M3.5 11.5h2M7 11.5h4.5" stroke="#1a1e5a" stroke-width="1.6"/><path d="M4 17.5h6" stroke="#151530" stroke-width="2"/><path d="M8.5 17.5L12.5 12H23.5V23H12.5z" fill="url(#tg)" stroke="#3a1080" stroke-width="0.8"/><path d="M13 14h9" stroke="#b898f8" stroke-width="1.2"/><circle cx="11.5" cy="17.5" r="1" fill="#e0d0ff"/></svg>
<div class="tt" style="left:139px;top:546.5px;font-size:18px;letter-spacing:-0.45px">STA70-2-8713-OP10-JIG01-PM01 [16]</div>
<div class="dot" style="left:634px;top:545.5px"></div>
<div class="a" style="left:0;top:597.0px;width:600px;height:1.5px;background:#fbfbfb"></div>
<div class="a" style="left:632px;top:597.0px;width:29px;height:1.5px;background:#fbfbfb"></div>
<svg style="left:109px;top:572.0px" width="26" height="24"><defs><linearGradient id="tg" x1="0" y1="0" x2="0.3" y2="1"><stop offset="0" stop-color="#a47af4"/><stop offset="0.45" stop-color="#6a34d4"/><stop offset="1" stop-color="#34108a"/></linearGradient></defs><rect x="1" y="1" width="13" height="16" fill="#f6f8ff" stroke="#9aa6e6" stroke-width="1.2"/><path d="M3.5 5.5h2M7 5.5h4.5M3.5 8.5h2M7 8.5h4.5M3.5 11.5h2M7 11.5h4.5" stroke="#1a1e5a" stroke-width="1.6"/><path d="M4 17.5h6" stroke="#151530" stroke-width="2"/><path d="M8.5 17.5L12.5 12H23.5V23H12.5z" fill="url(#tg)" stroke="#3a1080" stroke-width="0.8"/><path d="M13 14h9" stroke="#b898f8" stroke-width="1.2"/><circle cx="11.5" cy="17.5" r="1" fill="#e0d0ff"/></svg>
<div class="tt" style="left:139px;top:575.0px;font-size:18px;letter-spacing:-0.45px">STA70-2-8713-OP10-JIG01-PM02 [16]</div>
<div class="dot" style="left:634px;top:574.0px"></div>
<div class="a" style="left:0;top:625.5px;width:600px;height:1.5px;background:#fbfbfb"></div>
<div class="a" style="left:632px;top:625.5px;width:29px;height:1.5px;background:#fbfbfb"></div>
<svg style="left:109px;top:600.5px" width="26" height="24"><defs><linearGradient id="tg" x1="0" y1="0" x2="0.3" y2="1"><stop offset="0" stop-color="#a47af4"/><stop offset="0.45" stop-color="#6a34d4"/><stop offset="1" stop-color="#34108a"/></linearGradient></defs><rect x="1" y="1" width="13" height="16" fill="#f6f8ff" stroke="#9aa6e6" stroke-width="1.2"/><path d="M3.5 5.5h2M7 5.5h4.5M3.5 8.5h2M7 8.5h4.5M3.5 11.5h2M7 11.5h4.5" stroke="#1a1e5a" stroke-width="1.6"/><path d="M4 17.5h6" stroke="#151530" stroke-width="2"/><path d="M8.5 17.5L12.5 12H23.5V23H12.5z" fill="url(#tg)" stroke="#3a1080" stroke-width="0.8"/><path d="M13 14h9" stroke="#b898f8" stroke-width="1.2"/><circle cx="11.5" cy="17.5" r="1" fill="#e0d0ff"/></svg>
<div class="tt" style="left:139px;top:603.5px;font-size:18px;letter-spacing:-0.45px">STA70-2-8713-OP10-JIG01-PM03 [16]</div>
<div class="dot" style="left:634px;top:602.5px"></div>
<div class="a" style="left:0;top:654.0px;width:600px;height:1.5px;background:#fbfbfb"></div>
<div class="a" style="left:632px;top:654.0px;width:29px;height:1.5px;background:#fbfbfb"></div>
<svg style="left:109px;top:629.0px" width="26" height="24"><defs><linearGradient id="tg" x1="0" y1="0" x2="0.3" y2="1"><stop offset="0" stop-color="#a47af4"/><stop offset="0.45" stop-color="#6a34d4"/><stop offset="1" stop-color="#34108a"/></linearGradient></defs><rect x="1" y="1" width="13" height="16" fill="#f6f8ff" stroke="#9aa6e6" stroke-width="1.2"/><path d="M3.5 5.5h2M7 5.5h4.5M3.5 8.5h2M7 8.5h4.5M3.5 11.5h2M7 11.5h4.5" stroke="#1a1e5a" stroke-width="1.6"/><path d="M4 17.5h6" stroke="#151530" stroke-width="2"/><path d="M8.5 17.5L12.5 12H23.5V23H12.5z" fill="url(#tg)" stroke="#3a1080" stroke-width="0.8"/><path d="M13 14h9" stroke="#b898f8" stroke-width="1.2"/><circle cx="11.5" cy="17.5" r="1" fill="#e0d0ff"/></svg>
<div class="tt" style="left:139px;top:632.0px;font-size:18px;letter-spacing:-0.45px">STA70-2-8713-OP10-JIG01-PM04 [16]</div>
<div class="dot" style="left:634px;top:631.0px"></div>
<div class="a" style="left:0;top:682.5px;width:600px;height:1.5px;background:#fbfbfb"></div>
<div class="a" style="left:632px;top:682.5px;width:29px;height:1.5px;background:#fbfbfb"></div>
<svg style="left:109px;top:657.5px" width="26" height="24"><defs><linearGradient id="tg" x1="0" y1="0" x2="0.3" y2="1"><stop offset="0" stop-color="#a47af4"/><stop offset="0.45" stop-color="#6a34d4"/><stop offset="1" stop-color="#34108a"/></linearGradient></defs><rect x="1" y="1" width="13" height="16" fill="#f6f8ff" stroke="#9aa6e6" stroke-width="1.2"/><path d="M3.5 5.5h2M7 5.5h4.5M3.5 8.5h2M7 8.5h4.5M3.5 11.5h2M7 11.5h4.5" stroke="#1a1e5a" stroke-width="1.6"/><path d="M4 17.5h6" stroke="#151530" stroke-width="2"/><path d="M8.5 17.5L12.5 12H23.5V23H12.5z" fill="url(#tg)" stroke="#3a1080" stroke-width="0.8"/><path d="M13 14h9" stroke="#b898f8" stroke-width="1.2"/><circle cx="11.5" cy="17.5" r="1" fill="#e0d0ff"/></svg>
<div class="tt" style="left:139px;top:660.5px;font-size:18px;letter-spacing:-0.45px">STA70_1_JIG01_BM01 [47]</div>
<div class="dot" style="left:634px;top:659.5px"></div>
<div class="a" style="left:0;top:711.0px;width:600px;height:1.5px;background:#fbfbfb"></div>
<div class="a" style="left:632px;top:711.0px;width:29px;height:1.5px;background:#fbfbfb"></div>
<svg style="left:109px;top:686.0px" width="26" height="24"><defs><linearGradient id="tg" x1="0" y1="0" x2="0.3" y2="1"><stop offset="0" stop-color="#a47af4"/><stop offset="0.45" stop-color="#6a34d4"/><stop offset="1" stop-color="#34108a"/></linearGradient></defs><rect x="1" y="1" width="13" height="16" fill="#f6f8ff" stroke="#9aa6e6" stroke-width="1.2"/><path d="M3.5 5.5h2M7 5.5h4.5M3.5 8.5h2M7 8.5h4.5M3.5 11.5h2M7 11.5h4.5" stroke="#1a1e5a" stroke-width="1.6"/><path d="M4 17.5h6" stroke="#151530" stroke-width="2"/><path d="M8.5 17.5L12.5 12H23.5V23H12.5z" fill="url(#tg)" stroke="#3a1080" stroke-width="0.8"/><path d="M13 14h9" stroke="#b898f8" stroke-width="1.2"/><circle cx="11.5" cy="17.5" r="1" fill="#e0d0ff"/></svg>
<div class="tt" style="left:139px;top:689.0px;font-size:18px;letter-spacing:-0.45px">STA70_1_JIG01_PM01 [14]</div>
<div class="dot" style="left:634px;top:688.0px"></div>
<div class="a" style="left:0;top:739.5px;width:600px;height:1.5px;background:#fbfbfb"></div>
<div class="a" style="left:632px;top:739.5px;width:29px;height:1.5px;background:#fbfbfb"></div>
<svg style="left:109px;top:714.5px" width="26" height="24"><defs><linearGradient id="tg" x1="0" y1="0" x2="0.3" y2="1"><stop offset="0" stop-color="#a47af4"/><stop offset="0.45" stop-color="#6a34d4"/><stop offset="1" stop-color="#34108a"/></linearGradient></defs><rect x="1" y="1" width="13" height="16" fill="#f6f8ff" stroke="#9aa6e6" stroke-width="1.2"/><path d="M3.5 5.5h2M7 5.5h4.5M3.5 8.5h2M7 8.5h4.5M3.5 11.5h2M7 11.5h4.5" stroke="#1a1e5a" stroke-width="1.6"/><path d="M4 17.5h6" stroke="#151530" stroke-width="2"/><path d="M8.5 17.5L12.5 12H23.5V23H12.5z" fill="url(#tg)" stroke="#3a1080" stroke-width="0.8"/><path d="M13 14h9" stroke="#b898f8" stroke-width="1.2"/><circle cx="11.5" cy="17.5" r="1" fill="#e0d0ff"/></svg>
<div class="tt" style="left:139px;top:717.5px;font-size:18px;letter-spacing:-0.45px">STA70_1_JIG01_PM02 [4]</div>
<div class="dot" style="left:634px;top:716.5px"></div>
<div class="a" style="left:0;top:768.0px;width:600px;height:1.5px;background:#fbfbfb"></div>
<div class="a" style="left:632px;top:768.0px;width:29px;height:1.5px;background:#fbfbfb"></div>
<svg style="left:109px;top:743.0px" width="26" height="24"><defs><linearGradient id="tg" x1="0" y1="0" x2="0.3" y2="1"><stop offset="0" stop-color="#a47af4"/><stop offset="0.45" stop-color="#6a34d4"/><stop offset="1" stop-color="#34108a"/></linearGradient></defs><rect x="1" y="1" width="13" height="16" fill="#f6f8ff" stroke="#9aa6e6" stroke-width="1.2"/><path d="M3.5 5.5h2M7 5.5h4.5M3.5 8.5h2M7 8.5h4.5M3.5 11.5h2M7 11.5h4.5" stroke="#1a1e5a" stroke-width="1.6"/><path d="M4 17.5h6" stroke="#151530" stroke-width="2"/><path d="M8.5 17.5L12.5 12H23.5V23H12.5z" fill="url(#tg)" stroke="#3a1080" stroke-width="0.8"/><path d="M13 14h9" stroke="#b898f8" stroke-width="1.2"/><circle cx="11.5" cy="17.5" r="1" fill="#e0d0ff"/></svg>
<div class="tt" style="left:139px;top:746.0px;font-size:18px;letter-spacing:-0.45px">STA70_2_JIG01_BM01 [28]</div>
<div class="dot" style="left:634px;top:745.0px"></div>
<div class="a" style="left:0;top:796.5px;width:600px;height:1.5px;background:#fbfbfb"></div>
<div class="a" style="left:632px;top:796.5px;width:29px;height:1.5px;background:#fbfbfb"></div>
<svg style="left:109px;top:771.5px" width="26" height="24"><defs><linearGradient id="tg" x1="0" y1="0" x2="0.3" y2="1"><stop offset="0" stop-color="#a47af4"/><stop offset="0.45" stop-color="#6a34d4"/><stop offset="1" stop-color="#34108a"/></linearGradient></defs><rect x="1" y="1" width="13" height="16" fill="#f6f8ff" stroke="#9aa6e6" stroke-width="1.2"/><path d="M3.5 5.5h2M7 5.5h4.5M3.5 8.5h2M7 8.5h4.5M3.5 11.5h2M7 11.5h4.5" stroke="#1a1e5a" stroke-width="1.6"/><path d="M4 17.5h6" stroke="#151530" stroke-width="2"/><path d="M8.5 17.5L12.5 12H23.5V23H12.5z" fill="url(#tg)" stroke="#3a1080" stroke-width="0.8"/><path d="M13 14h9" stroke="#b898f8" stroke-width="1.2"/><circle cx="11.5" cy="17.5" r="1" fill="#e0d0ff"/></svg>
<div class="tt" style="left:139px;top:774.5px;font-size:18px;letter-spacing:-0.45px">STA70_2_JIG01_PM01 [14]</div>
<div class="dot" style="left:634px;top:773.5px"></div>
<div class="a" style="left:0;top:825.0px;width:600px;height:1.5px;background:#fbfbfb"></div>
<div class="a" style="left:632px;top:825.0px;width:29px;height:1.5px;background:#fbfbfb"></div>
<svg style="left:109px;top:800.0px" width="26" height="24"><defs><linearGradient id="tg" x1="0" y1="0" x2="0.3" y2="1"><stop offset="0" stop-color="#a47af4"/><stop offset="0.45" stop-color="#6a34d4"/><stop offset="1" stop-color="#34108a"/></linearGradient></defs><rect x="1" y="1" width="13" height="16" fill="#f6f8ff" stroke="#9aa6e6" stroke-width="1.2"/><path d="M3.5 5.5h2M7 5.5h4.5M3.5 8.5h2M7 8.5h4.5M3.5 11.5h2M7 11.5h4.5" stroke="#1a1e5a" stroke-width="1.6"/><path d="M4 17.5h6" stroke="#151530" stroke-width="2"/><path d="M8.5 17.5L12.5 12H23.5V23H12.5z" fill="url(#tg)" stroke="#3a1080" stroke-width="0.8"/><path d="M13 14h9" stroke="#b898f8" stroke-width="1.2"/><circle cx="11.5" cy="17.5" r="1" fill="#e0d0ff"/></svg>
<div class="tt" style="left:139px;top:803.0px;font-size:18px;letter-spacing:-0.45px">STA70_2_JIG01_PM02 [4]</div>
<div class="dot" style="left:634px;top:802.0px"></div>
<div class="a" style="left:0;top:853.5px;width:600px;height:1.5px;background:#fbfbfb"></div>
<div class="a" style="left:632px;top:853.5px;width:29px;height:1.5px;background:#fbfbfb"></div>
<svg style="left:109px;top:828.5px" width="26" height="24"><defs><linearGradient id="tg" x1="0" y1="0" x2="0.3" y2="1"><stop offset="0" stop-color="#a47af4"/><stop offset="0.45" stop-color="#6a34d4"/><stop offset="1" stop-color="#34108a"/></linearGradient></defs><rect x="1" y="1" width="13" height="16" fill="#f6f8ff" stroke="#9aa6e6" stroke-width="1.2"/><path d="M3.5 5.5h2M7 5.5h4.5M3.5 8.5h2M7 8.5h4.5M3.5 11.5h2M7 11.5h4.5" stroke="#1a1e5a" stroke-width="1.6"/><path d="M4 17.5h6" stroke="#151530" stroke-width="2"/><path d="M8.5 17.5L12.5 12H23.5V23H12.5z" fill="url(#tg)" stroke="#3a1080" stroke-width="0.8"/><path d="M13 14h9" stroke="#b898f8" stroke-width="1.2"/><circle cx="11.5" cy="17.5" r="1" fill="#e0d0ff"/></svg>
<div class="tt" style="left:139px;top:831.5px;font-size:18px;letter-spacing:-0.45px">变量表_1 [0]</div>
<div class="dot" style="left:634px;top:830.5px"></div>
<div class="a" style="left:0;top:882.0px;width:600px;height:1.5px;background:#fbfbfb"></div>
<div class="a" style="left:632px;top:882.0px;width:29px;height:1.5px;background:#fbfbfb"></div>
<svg style="left:64px;top:863.0px" width="10" height="14"><path d="M1 1l8 6-8 6z" fill="#111"/></svg>
<svg style="left:82px;top:858.0px" width="26" height="22"><defs><linearGradient id="fdg" x1="0" y1="0" x2="1" y2="1"><stop offset="0" stop-color="#fcd878"/><stop offset="0.45" stop-color="#fff2c4"/><stop offset="1" stop-color="#f8cc60"/></linearGradient></defs><path d="M1 1.5h7.5l2.5 3h11v16H1z" fill="url(#fdg)" stroke="#c8901e" stroke-width="1.4"/><rect x="8" y="9" width="14" height="13" fill="#eef0ff" stroke="#6878d8"/><path d="M11 12v7M13 13h6M13 16h6" stroke="#1a2060" stroke-width="1.6"/></svg>
<div class="tt" style="left:112px;top:860.0px;font-size:18px;letter-spacing:-0.45px">PLC 数据类型</div>
<div class="dot" style="left:634px;top:859.0px"></div>
<div class="a" style="left:0;top:910.5px;width:600px;height:1.5px;background:#fbfbfb"></div>
<div class="a" style="left:632px;top:910.5px;width:29px;height:1.5px;background:#fbfbfb"></div>
<svg style="left:64px;top:891.5px" width="10" height="14"><path d="M1 1l8 6-8 6z" fill="#111"/></svg>
<svg style="left:82px;top:886.5px" width="24" height="22"><defs><linearGradient id="fdg" x1="0" y1="0" x2="1" y2="1"><stop offset="0" stop-color="#fcd878"/><stop offset="0.45" stop-color="#fff2c4"/><stop offset="1" stop-color="#f8cc60"/></linearGradient></defs><path d="M1 1.5h7.5l2.5 3h11v16H1z" fill="url(#fdg)" stroke="#c8901e" stroke-width="1.4"/><rect x="5" y="5.5" width="4.5" height="3" rx="1" fill="#0a14f8"/><path d="M6.3 9.5V16.5H12M6.3 12.3H12" fill="none" stroke="#0a14f8" stroke-width="2"/><rect x="14" y="10" width="4.5" height="3" rx="1" fill="#0a14f8"/><rect x="14" y="14.5" width="4.5" height="3" rx="1" fill="#0a14f8"/></svg>
<div class="tt" style="left:112px;top:888.5px;font-size:18px;letter-spacing:-0.45px">监控与强制表</div>
</div>
<div class="a" style="left:36px;top:1153px;width:687px;height:5px;background:#1d2233;"></div>
<div class="hdr" style="left:36px;top:1158px;width:687px;height:30px"></div>
<div class="a" style="left:66px;top:1158px;width:2px;height:30px;background:#b8b8b8;"></div>
<svg style="left:42px;top:1164px" width="14" height="18" viewBox="0 0 14 18"><path d="M3 2l7 7-7 7" fill="none" stroke="#111" stroke-width="2.8"/></svg>
<div class="t" style="left:73px;top:1162px;font-size:22px;color:#000;font-weight:bold">参考项目</div>
<div class="a" style="left:36px;top:1188px;width:687px;height:6px;background:#1d2233;"></div>
<div class="hdr" style="left:36px;top:1194px;width:687px;height:30px"></div>
<div class="a" style="left:66px;top:1194px;width:2px;height:30px;background:#b8b8b8;"></div>
<svg style="left:42px;top:1203px" width="18" height="12" viewBox="0 0 18 12"><path d="M2 2l7 7 7-7" fill="none" stroke="#111" stroke-width="2.8"/></svg>
<div class="t" style="left:73px;top:1198px;font-size:22px;color:#000;font-weight:bold">详细视图</div>
<div class="a" style="left:36px;top:1224px;width:687px;height:2px;background:#9c9c9c;"></div>
<div class="a" style="left:36px;top:1226px;width:687px;height:36px;background:#cccccc;"></div>
<div class="a" style="left:36px;top:1261px;width:687px;height:2px;background:#9c9c9c;"></div>
<div class="a" style="left:36px;top:1263px;width:687px;height:41px;background:#ebebeb;"></div>
<div class="hdr" style="left:36px;top:1304px;width:687px;height:27px;border-top:1.5px solid #b4b4b4;border-bottom:1.5px solid #b4b4b4"></div>
<div class="a" style="left:63px;top:1305px;width:2px;height:25px;background:#c4c4c4;"></div>
<div class="a" style="left:303px;top:1305px;width:2px;height:25px;background:#c4c4c4;"></div>
<div class="a" style="left:423px;top:1305px;width:2px;height:25px;background:#c4c4c4;"></div>
<div class="a" style="left:543px;top:1305px;width:2px;height:25px;background:#c4c4c4;"></div>
<div class="a" style="left:663px;top:1305px;width:2px;height:25px;background:#c4c4c4;"></div>
<div class="a" style="left:697px;top:1305px;width:2px;height:25px;background:#c4c4c4;"></div>
<div class="t" style="left:70px;top:1308px;font-size:19px;color:#222;">名称</div>
<div class="t" style="left:310px;top:1308px;font-size:19px;color:#222;">数据类型</div>
<div class="t" style="left:430px;top:1308px;font-size:19px;color:#222;">详细信息</div>
<div class="t" style="left:550px;top:1308px;font-size:19px;color:#222;">注释</div>
<div class="a" style="left:36px;top:1331px;width:687px;height:6px;background:#f4f4f4;"></div>
<div class="a" style="left:727px;top:111px;width:1105px;height:699px;background:#3a445e;"></div>
<div class="a" style="left:727px;top:111px;width:1105px;height:699px;overflow:hidden"><svg style="left:0;top:0" width="1105" height="699"><text x="763" y="284.0" style="font-family:Liberation Sans;font-size:25px;letter-spacing:-0.5px" fill="#283048" fill-opacity="0.14">00110</text><text x="673" y="311.5" style="font-family:Liberation Sans;font-size:25px;letter-spacing:-0.5px" fill="#283048" fill-opacity="0.14">0110011100010</text><text x="568" y="339.0" style="font-family:Liberation Sans;font-size:25px;letter-spacing:-0.5px" fill="#283048" fill-opacity="0.14">000101111110100010111</text><text x="433" y="366.5" style="font-family:Liberation Sans;font-size:25px;letter-spacing:-0.5px" fill="#283048" fill-opacity="0.14">11110101010011001101010011100</text><text x="343" y="394.0" style="font-family:Liberation Sans;font-size:25px;letter-spacing:-0.5px" fill="#283048" fill-opacity="0.14">011100100000111001110111101101111101101</text><text x="258" y="421.5" style="font-family:Liberation Sans;font-size:25px;letter-spacing:-0.5px" fill="#283048" fill-opacity="0.14">001111110001111101011111000101010100110</text><text x="203" y="449.0" style="font-family:Liberation Sans;font-size:25px;letter-spacing:-0.5px" fill="#283048" fill-opacity="0.14">100101100001011010111111111010001100111001</text><text x="128" y="476.5" style="font-family:Liberation Sans;font-size:25px;letter-spacing:-0.5px" fill="#283048" fill-opacity="0.14">00000100100100100101</text><text x="68" y="504.0" style="font-family:Liberation Sans;font-size:25px;letter-spacing:-0.5px" fill="#283048" fill-opacity="0.14">101000000100110101</text><text x="28" y="531.5" style="font-family:Liberation Sans;font-size:25px;letter-spacing:-0.5px" fill="#283048" fill-opacity="0.14">101100000001001101011</text><text x="8" y="559.0" style="font-family:Liberation Sans;font-size:25px;letter-spacing:-0.5px" fill="#283048" fill-opacity="0.14">11110110001000111</text><text x="8" y="586.5" style="font-family:Liberation Sans;font-size:25px;letter-spacing:-0.5px" fill="#283048" fill-opacity="0.14">010111111000101</text><text x="8" y="614.0" style="font-family:Liberation Sans;font-size:25px;letter-spacing:-0.5px" fill="#283048" fill-opacity="0.14">01001110101010</text><text x="8" y="641.5" style="font-family:Liberation Sans;font-size:25px;letter-spacing:-0.5px" fill="#283048" fill-opacity="0.14">0100100010010</text><text x="8" y="669.0" style="font-family:Liberation Sans;font-size:25px;letter-spacing:-0.5px" fill="#283048" fill-opacity="0.14">001110000</text><defs><linearGradient id="hub" x1="0" y1="0.2" x2="0.7" y2="0.9"><stop offset="0" stop-color="#3f4a6a"/><stop offset="0.2" stop-color="#505c86"/><stop offset="0.36" stop-color="#3e4867"/><stop offset="1" stop-color="#3a4461"/></linearGradient></defs><path d="M731.5,608.2 L779.7,599.3 L786.2,628.3 L739.9,646.0 L741.3,665.3 L789.0,667.9 L786.7,698.3 L738.3,705.0 L734.0,724.6 L777.9,738.4 L767.0,768.1 L719.8,763.4 L710.2,781.9 L747.2,806.0 L728.5,833.1 L685.7,817.2 L671.4,833.3 L699.2,866.2 L673.9,888.7 L638.4,862.8 L620.4,875.4 L636.9,914.7 L606.8,931.1 L581.0,896.9 L560.6,905.3 L564.7,948.3 L531.9,957.6 L517.6,917.4 L496.0,920.9 L487.6,964.7 L454.1,966.2 L452.3,922.8 L431.1,921.1 L410.6,962.8 L378.9,956.4 L389.7,912.7 L370.3,906.1 L339.2,942.8 L311.4,928.8 L334.0,887.9 L317.8,876.7 L278.1,905.9 L256.1,885.4 L289.0,850.0 L277.0,835.0 L231.5,854.7 L216.8,829.1 L257.8,801.6 L250.9,783.8 L202.7,792.7 L196.2,763.7 L242.5,746.0 L241.1,726.7 L193.4,724.1 L195.7,693.7 L244.1,687.0 L248.4,667.4 L204.5,653.6 L215.4,623.9 L262.6,628.6 L272.2,610.1 L235.2,586.0 L253.9,558.9 L296.7,574.8 L311.0,558.7 L283.2,525.8 L308.5,503.3 L344.0,529.2 L362.0,516.6 L345.5,477.3 L375.6,460.9 L401.4,495.1 L421.8,486.7 L417.7,443.7 L450.5,434.4 L464.8,474.6 L486.4,471.1 L494.8,427.3 L528.3,425.8 L530.1,469.2 L551.3,470.9 L571.8,429.2 L603.5,435.6 L592.7,479.3 L612.1,485.9 L643.2,449.2 L671.0,463.2 L648.4,504.1 L664.6,515.3 L704.3,486.1 L726.3,506.6 L693.4,542.0 L705.4,557.0 L750.9,537.3 L765.6,562.9 L724.6,590.4Z" fill="#313852"/><path d="M736.3,596.2 L784.5,587.3 L791.0,616.3 L744.7,634.0 L746.1,653.3 L793.8,655.9 L791.5,686.3 L743.1,693.0 L738.8,712.6 L782.7,726.4 L771.8,756.1 L724.6,751.4 L715.0,769.9 L752.0,794.0 L733.3,821.1 L690.5,805.2 L676.2,821.3 L704.0,854.2 L678.7,876.7 L643.2,850.8 L625.2,863.4 L641.7,902.7 L611.6,919.1 L585.8,884.9 L565.4,893.3 L569.5,936.3 L536.7,945.6 L522.4,905.4 L500.8,908.9 L492.4,952.7 L458.9,954.2 L457.1,910.8 L435.9,909.1 L415.4,950.8 L383.7,944.4 L394.5,900.7 L375.1,894.1 L344.0,930.8 L316.2,916.8 L338.8,875.9 L322.6,864.7 L282.9,893.9 L260.9,873.4 L293.8,838.0 L281.8,823.0 L236.3,842.7 L221.6,817.1 L262.6,789.6 L255.7,771.8 L207.5,780.7 L201.0,751.7 L247.3,734.0 L245.9,714.7 L198.2,712.1 L200.5,681.7 L248.9,675.0 L253.2,655.4 L209.3,641.6 L220.2,611.9 L267.4,616.6 L277.0,598.1 L240.0,574.0 L258.7,546.9 L301.5,562.8 L315.8,546.7 L288.0,513.8 L313.3,491.3 L348.8,517.2 L366.8,504.6 L350.3,465.3 L380.4,448.9 L406.2,483.1 L426.6,474.7 L422.5,431.7 L455.3,422.4 L469.6,462.6 L491.2,459.1 L499.6,415.3 L533.1,413.8 L534.9,457.2 L556.1,458.9 L576.6,417.2 L608.3,423.6 L597.5,467.3 L616.9,473.9 L648.0,437.2 L675.8,451.2 L653.2,492.1 L669.4,503.3 L709.1,474.1 L731.1,494.6 L698.2,530.0 L710.2,545.0 L755.7,525.3 L770.4,550.9 L729.4,578.4Z" fill="#3d4764"/><ellipse cx="495" cy="679" rx="200" ry="200" transform="rotate(-25 495 679)" fill="url(#hub)"/><ellipse cx="523" cy="661" rx="165" ry="162" transform="rotate(-25 523 661)" fill="#333a55"/><clipPath id="c2988"><ellipse cx="523" cy="661" rx="165" ry="162" transform="rotate(-25 523 661)"/></clipPath><ellipse clip-path="url(#c2988)" cx="568" cy="734" rx="190" ry="125" transform="rotate(-28 568 734)" fill="#39425e"/><path d="M1385.8,267.8 L1428.3,277.6 L1415.2,295.3 L1368.7,290.9 L1357.3,301.7 L1391.7,317.5 L1369.7,332.9 L1328.5,322.0 L1311.8,330.9 L1335.4,351.3 L1306.2,363.3 L1273.6,346.6 L1253.0,353.0 L1263.9,376.4 L1229.8,384.0 L1208.5,362.9 L1185.6,366.1 L1182.9,390.7 L1146.8,393.2 L1138.4,369.4 L1115.2,369.3 L1099.0,393.0 L1063.8,390.2 L1069.1,365.7 L1047.3,362.2 L1019.1,383.2 L987.6,375.4 L1006.1,352.0 L987.6,345.5 L949.6,362.0 L924.3,349.8 L954.6,329.6 L940.8,320.5 L896.0,331.1 L879.1,315.5 L918.6,300.1 L910.8,289.2 L862.9,293.2 L855.6,275.4 L901.3,266.0 L899.9,254.2 L852.8,251.1 L855.8,232.7 L903.8,230.0 L909.0,218.2 L866.5,208.4 L879.6,190.7 L926.1,195.1 L937.5,184.3 L903.1,168.5 L925.1,153.1 L966.3,164.0 L983.0,155.1 L959.4,134.7 L988.6,122.7 L1021.2,139.4 L1041.8,133.0 L1030.9,109.6 L1065.0,102.0 L1086.3,123.1 L1109.2,119.9 L1111.9,95.3 L1148.0,92.8 L1156.4,116.6 L1179.6,116.7 L1195.8,93.0 L1231.0,95.8 L1225.7,120.3 L1247.5,123.8 L1275.7,102.8 L1307.2,110.6 L1288.7,134.0 L1307.2,140.5 L1345.2,124.0 L1370.5,136.2 L1340.2,156.4 L1354.0,165.5 L1398.8,154.9 L1415.7,170.5 L1376.2,185.9 L1384.0,196.8 L1431.9,192.8 L1439.2,210.6 L1393.5,220.0 L1394.9,231.8 L1442.0,234.9 L1439.0,253.3 L1391.0,256.0Z" fill="#313852"/><path d="M1391.4,253.8 L1433.9,263.6 L1420.8,281.3 L1374.3,276.9 L1362.9,287.7 L1397.3,303.5 L1375.3,318.9 L1334.1,308.0 L1317.4,316.9 L1341.0,337.3 L1311.8,349.3 L1279.2,332.6 L1258.6,339.0 L1269.5,362.4 L1235.4,370.0 L1214.1,348.9 L1191.2,352.1 L1188.5,376.7 L1152.4,379.2 L1144.0,355.4 L1120.8,355.3 L1104.6,379.0 L1069.4,376.2 L1074.7,351.7 L1052.9,348.2 L1024.7,369.2 L993.2,361.4 L1011.7,338.0 L993.2,331.5 L955.2,348.0 L929.9,335.8 L960.2,315.6 L946.4,306.5 L901.6,317.1 L884.7,301.5 L924.2,286.1 L916.4,275.2 L868.5,279.2 L861.2,261.4 L906.9,252.0 L905.5,240.2 L858.4,237.1 L861.4,218.7 L909.4,216.0 L914.6,204.2 L872.1,194.4 L885.2,176.7 L931.7,181.1 L943.1,170.3 L908.7,154.5 L930.7,139.1 L971.9,150.0 L988.6,141.1 L965.0,120.7 L994.2,108.7 L1026.8,125.4 L1047.4,119.0 L1036.5,95.6 L1070.6,88.0 L1091.9,109.1 L1114.8,105.9 L1117.5,81.3 L1153.6,78.8 L1162.0,102.6 L1185.2,102.7 L1201.4,79.0 L1236.6,81.8 L1231.3,106.3 L1253.1,109.8 L1281.3,88.8 L1312.8,96.6 L1294.3,120.0 L1312.8,126.5 L1350.8,110.0 L1376.1,122.2 L1345.8,142.4 L1359.6,151.5 L1404.4,140.9 L1421.3,156.5 L1381.8,171.9 L1389.6,182.8 L1437.5,178.8 L1444.8,196.6 L1399.1,206.0 L1400.5,217.8 L1447.6,220.9 L1444.6,239.3 L1396.6,242.0Z" fill="#3d4764"/><ellipse cx="1153" cy="209" rx="208" ry="88" transform="rotate(-3 1153 209)" fill="url(#hub)"/><ellipse cx="1153" cy="176" rx="156" ry="52" transform="rotate(-3 1153 176)" fill="#333a55"/><clipPath id="c5853"><ellipse cx="1153" cy="176" rx="156" ry="52" transform="rotate(-3 1153 176)"/></clipPath><ellipse clip-path="url(#c5853)" cx="1178" cy="239" rx="160" ry="42" transform="rotate(-3 1178 239)" fill="#39425e"/><path d="M1507.1,583.4 L1571.3,587.7 L1566.2,609.7 L1500.5,612.2 L1493.4,626.2 L1551.7,638.6 L1535.0,659.7 L1471.6,653.8 L1457.4,666.8 L1505.9,686.3 L1478.8,705.1 L1422.0,691.3 L1401.7,702.4 L1437.0,727.7 L1401.4,742.8 L1355.1,722.1 L1330.0,730.5 L1349.7,759.9 L1308.0,770.4 L1275.4,744.1 L1247.2,749.2 L1250.0,780.8 L1205.0,785.8 L1188.3,755.8 L1159.0,757.3 L1144.7,788.8 L1099.4,788.2 L1099.8,756.4 L1071.3,754.2 L1040.9,783.5 L998.5,777.2 L1015.9,745.9 L990.2,740.1 L945.8,765.2 L909.1,753.6 L942.4,724.9 L921.2,715.9 L865.7,735.2 L837.3,719.2 L884.1,695.0 L869.0,683.5 L806.2,695.5 L788.0,676.1 L845.2,658.1 L837.1,644.8 L771.3,648.8 L764.6,627.3 L828.2,616.7 L827.7,602.6 L763.5,598.3 L768.6,576.3 L834.3,573.8 L841.4,559.8 L783.1,547.4 L799.8,526.3 L863.2,532.2 L877.4,519.2 L828.9,499.7 L856.0,480.9 L912.8,494.7 L933.1,483.6 L897.8,458.3 L933.4,443.2 L979.7,463.9 L1004.8,455.5 L985.1,426.1 L1026.8,415.6 L1059.4,441.9 L1087.6,436.8 L1084.8,405.2 L1129.8,400.2 L1146.5,430.2 L1175.8,428.7 L1190.1,397.2 L1235.4,397.8 L1235.0,429.6 L1263.5,431.8 L1293.9,402.5 L1336.3,408.8 L1318.9,440.1 L1344.6,445.9 L1389.0,420.8 L1425.7,432.4 L1392.4,461.1 L1413.6,470.1 L1469.1,450.8 L1497.5,466.8 L1450.7,491.0 L1465.8,502.5 L1528.6,490.5 L1546.8,509.9 L1489.6,527.9 L1497.7,541.2 L1563.5,537.2 L1570.2,558.7 L1506.6,569.3Z" fill="#313852"/><path d="M1512.7,569.4 L1576.9,573.7 L1571.8,595.7 L1506.1,598.2 L1499.0,612.2 L1557.3,624.6 L1540.6,645.7 L1477.2,639.8 L1463.0,652.8 L1511.5,672.3 L1484.4,691.1 L1427.6,677.3 L1407.3,688.4 L1442.6,713.7 L1407.0,728.8 L1360.7,708.1 L1335.6,716.5 L1355.3,745.9 L1313.6,756.4 L1281.0,730.1 L1252.8,735.2 L1255.6,766.8 L1210.6,771.8 L1193.9,741.8 L1164.6,743.3 L1150.3,774.8 L1105.0,774.2 L1105.4,742.4 L1076.9,740.2 L1046.5,769.5 L1004.1,763.2 L1021.5,731.9 L995.8,726.1 L951.4,751.2 L914.7,739.6 L948.0,710.9 L926.8,701.9 L871.3,721.2 L842.9,705.2 L889.7,681.0 L874.6,669.5 L811.8,681.5 L793.6,662.1 L850.8,644.1 L842.7,630.8 L776.9,634.8 L770.2,613.3 L833.8,602.7 L833.3,588.6 L769.1,584.3 L774.2,562.3 L839.9,559.8 L847.0,545.8 L788.7,533.4 L805.4,512.3 L868.8,518.2 L883.0,505.2 L834.5,485.7 L861.6,466.9 L918.4,480.7 L938.7,469.6 L903.4,444.3 L939.0,429.2 L985.3,449.9 L1010.4,441.5 L990.7,412.1 L1032.4,401.6 L1065.0,427.9 L1093.2,422.8 L1090.4,391.2 L1135.4,386.2 L1152.1,416.2 L1181.4,414.7 L1195.7,383.2 L1241.0,383.8 L1240.6,415.6 L1269.1,417.8 L1299.5,388.5 L1341.9,394.8 L1324.5,426.1 L1350.2,431.9 L1394.6,406.8 L1431.3,418.4 L1398.0,447.1 L1419.2,456.1 L1474.7,436.8 L1503.1,452.8 L1456.3,477.0 L1471.4,488.5 L1534.2,476.5 L1552.4,495.9 L1495.2,513.9 L1503.3,527.2 L1569.1,523.2 L1575.8,544.7 L1512.2,555.3Z" fill="#3d4764"/><ellipse cx="1173" cy="554" rx="296" ry="148" transform="rotate(-3 1173 554)" fill="url(#hub)"/><ellipse cx="1178" cy="551" rx="238" ry="124" transform="rotate(-3 1178 551)" fill="#333a55"/><clipPath id="c8945"><ellipse cx="1178" cy="551" rx="238" ry="124" transform="rotate(-3 1178 551)"/></clipPath><ellipse clip-path="url(#c8945)" cx="1188" cy="557" rx="215" ry="48" transform="rotate(-3 1188 557)" fill="#39425e"/></svg></div>
<div class="a" style="left:727px;top:809px;width:1105px;height:5px;background:#1d2130;"></div>
<div class="a" style="left:723px;top:111px;width:4px;height:1226px;background:#1d2130;"></div>
<div class="a" style="left:1832px;top:111px;width:4px;height:1226px;background:#1d2130;"></div>
<div class="a" style="left:727px;top:814px;width:1105px;height:36px;background:#b4b4b4;"></div>
<div class="a" style="left:1382px;top:819px;width:111px;height:33px;border:1.5px solid #9a9a9a;border-bottom:none;background:linear-gradient(#e8e8e8,#d4d4d4)"></div>
<svg style="left:1387px;top:823px" width="26" height="26"><rect x="1" y="1" width="19" height="22" fill="#eef0ff" stroke="#8090e0"/><path d="M3 5h8M3 8h6M3 11h5" stroke="#888"/><circle cx="11" cy="13" r="5" fill="#f8f8ff" stroke="#333" stroke-width="2"/><path d="M15 17l5 5" stroke="#2050c0" stroke-width="3"/></svg>
<div class="t" style="left:1414px;top:823px;font-size:22px;color:#555;font-weight:bold">属性</div>
<div class="a" style="left:1495px;top:819px;width:113px;height:33px;border:1.5px solid #9a9a9a;border-bottom:none;background:linear-gradient(#f4f4f4,#e4e4e4)"></div>
<svg style="left:1500px;top:822px" width="26" height="28"><rect x="4" y="3" width="16" height="21" fill="#eef0ff" stroke="#8090e0"/><text x="8" y="20" font-size="16" font-weight="bold" font-family="Liberation Serif" fill="#0c1660">i</text><path d="M2 6V1M0 3l2-2 2 2" stroke="#0c1660" stroke-width="2" fill="none"/><path d="M14 25h10M21 22l3 3-3 3" stroke="#0c1660" stroke-width="2.5" fill="none"/></svg>
<div class="t" style="left:1527px;top:823px;font-size:22px;color:#000;font-weight:bold">信息</div>
<div class="a" style="left:1610px;top:819px;width:111px;height:33px;border:1.5px solid #9a9a9a;border-bottom:none;background:linear-gradient(#e8e8e8,#d4d4d4)"></div>
<svg style="left:1615px;top:823px" width="24" height="26"><rect x="1" y="1" width="18" height="22" fill="#eef0ff" stroke="#8090e0"/><path d="M6 4v7c0 3 5 3 5 0V4M8.5 13v3c0 3 5 3 5 0" fill="none" stroke="#333" stroke-width="1.8"/><circle cx="13.5" cy="16" r="2" fill="#333"/></svg>
<div class="t" style="left:1642px;top:823px;font-size:22px;color:#555;font-weight:bold">诊断</div>
<svg style="left:1752px;top:824px" width="20" height="20" viewBox="0 0 20 20"><rect x="6" y="1" width="12" height="11" fill="#fff"/><rect x="1" y="6" width="12" height="12" fill="#fff" stroke="#b4b4b4" stroke-width="1"/></svg>
<svg style="left:1778px;top:824px" width="20" height="20" viewBox="0 0 20 20"><rect x="1" y="2" width="17" height="15" fill="none" stroke="#e0e0e0" stroke-width="1.5"/><path d="M1 6h17M1 9h17M1 12h17" stroke="#e0e0e0"/></svg>
<svg style="left:1805px;top:826px" width="22" height="14" viewBox="0 0 22 14"><path d="M1 1h20L11 12z" fill="#fff"/></svg>
<div class="a" style="left:727px;top:850px;width:1105px;height:5px;background:#ebebeb;"></div>
<div class="a" style="left:727px;top:855px;width:1105px;height:37px;background:#c8c8c8;"></div>
<div class="a" style="left:727px;top:891px;width:1105px;height:2px;background:#9a9a9a;"></div>
<div class="a" style="left:737px;top:859px;width:94px;border-bottom:none;height:35px;border:1.5px solid #9a9a9a;border-bottom:none;background:linear-gradient(#f6f6f6,#ececec)"></div>
<div class="t" style="left:754.0px;top:864px;font-size:22px;color:#000;font-weight:bold">常规</div>
<div class="a" style="left:833px;top:859px;width:140px;height:33px;border:1.5px solid #9a9a9a;background:linear-gradient(#ebebeb,#d8d8d8)"></div>
<div class="t" style="left:851.0px;top:864px;font-size:22px;color:#666;font-weight:bold">交叉引用</div>
<div class="a" style="left:976px;top:859px;width:95px;height:33px;border:1.5px solid #9a9a9a;background:linear-gradient(#ebebeb,#d8d8d8)"></div>
<div class="t" style="left:993.5px;top:864px;font-size:22px;color:#666;font-weight:bold">编译</div>
<div class="a" style="left:727px;top:893px;width:1105px;height:67px;background:#efefef;"></div>
<div class="a" style="left:727px;top:930px;width:1105px;height:32px;background:#f1f1f1;"></div>
<div class="a" style="left:734px;top:896px;width:33px;height:33px;border:1.5px solid #4a78e0;border-radius:3px;background:#fff"></div>
<svg style="left:738px;top:900px" width="26" height="26" viewBox="0 0 26 26"><circle cx="13" cy="13" r="11" fill="#e81818"/><circle cx="13" cy="13" r="11" fill="none" stroke="#a00" stroke-width="1"/><path d="M8 8l10 10M18 8L8 18" stroke="#fff" stroke-width="3.5"/></svg>
<div class="a" style="left:769px;top:896px;width:33px;height:33px;border:1.5px solid #4a78e0;border-radius:3px;background:#fff"></div>
<svg style="left:773px;top:900px" width="26" height="26" viewBox="0 0 26 26"><path d="M13 2L24 23H2z" fill="#f4e800" stroke="#c8b400"/><rect x="11" y="8" width="4" height="9" fill="#111840"/><rect x="11" y="18" width="4" height="3" fill="#111840"/></svg>
<div class="a" style="left:805px;top:896px;width:33px;height:33px;border:1.5px solid #4a78e0;border-radius:3px;background:#fff"></div>
<svg style="left:809px;top:900px" width="26" height="26" viewBox="0 0 26 26"><circle cx="13" cy="13" r="11.5" fill="#0818e0"/><text x="9.5" y="21" font-size="17" font-weight="bold" font-family="Liberation Serif" fill="#fff">i</text></svg>
<div class="a" style="left:845px;top:900px;width:300px;height:28px;background:#fff;border:1.5px solid #b0b0b0"></div>
<div class="a" style="left:1118px;top:901px;width:26px;height:26px;background:linear-gradient(#fafafa,#dcdcdc);border-left:1.5px solid #c0c0c0"></div>
<svg style="left:1124px;top:909px" width="14" height="10" viewBox="0 0 14 10"><path d="M1 1h12L7 8z" fill="#111"/></svg>
<div class="t" style="left:852px;top:904px;font-size:19.5px;color:#111;">显示所有消息</div>
<div class="hdr" style="left:727px;top:962px;width:1105px;height:29px;border-top:1.5px solid #c0c0c0;border-bottom:1.5px solid #c0c0c0"></div>
<div class="a" style="left:770px;top:963px;width:2px;height:27px;background:#c8c8c8;"></div>
<div class="a" style="left:1559px;top:963px;width:2px;height:27px;background:#c8c8c8;"></div>
<div class="a" style="left:1635px;top:963px;width:2px;height:27px;background:#c8c8c8;"></div>
<div class="a" style="left:1711px;top:963px;width:2px;height:27px;background:#c8c8c8;"></div>
<div class="a" style="left:1805px;top:963px;width:2px;height:27px;background:#c8c8c8;"></div>
<div class="t" style="left:738px;top:967px;font-size:19px;color:#e08a10;font-weight:bold">!</div>
<div class="t" style="left:777px;top:966px;font-size:19.5px;color:#222;">消息</div>
<div class="t" style="left:1565px;top:966px;font-size:19.5px;color:#222;">转至</div>
<div class="t" style="left:1643px;top:969px;font-size:17px;color:#3a4a8a;">?</div>
<div class="t" style="left:1717px;top:966px;font-size:19.5px;color:#222;">日期</div>
<div class="a" style="left:727px;top:991px;width:1078px;height:319px;background:#efefef;"></div>
<div class="a" style="left:729px;top:1019.0px;width:1076px;height:1.5px;background:#fbfbfb;"></div>
<svg style="left:736px;top:994.0px" width="26" height="26" viewBox="0 0 26 26"><circle cx="13" cy="12.5" r="12" fill="#0a1ee8"/><path d="M7 12.5l4.5 4.5 8-8.5" fill="none" stroke="#fff" stroke-width="3.2"/></svg>
<div class="mt" style="left:860px;top:997.0px;font-size:18px;letter-spacing:-0.4px">STA70-1-8713-OP20-JIG01-PM01 下载成功。</div>
<div class="mt" style="left:1718px;top:997.0px;font-size:18px;letter-spacing:-0.2px">2023/3/5</div>
<div class="a" style="left:729px;top:1047.5px;width:1076px;height:1.5px;background:#fbfbfb;"></div>
<svg style="left:736px;top:1022.5px" width="26" height="26" viewBox="0 0 26 26"><circle cx="13" cy="12.5" r="12" fill="#0a1ee8"/><path d="M7 12.5l4.5 4.5 8-8.5" fill="none" stroke="#fff" stroke-width="3.2"/></svg>
<div class="mt" style="left:805px;top:1025.5px;font-size:18px;letter-spacing:-0.4px">从设备中上传已完成（错误：0；警告：0）。</div>
<div class="mt" style="left:1718px;top:1025.5px;font-size:18px;letter-spacing:-0.2px">2023/3/5</div>
<div class="a" style="left:729px;top:1076.0px;width:1076px;height:1.5px;background:#fbfbfb;"></div>
<svg style="left:736px;top:1051.0px" width="26" height="26" viewBox="0 0 26 26"><circle cx="13" cy="12.5" r="12" fill="#0a1ee8"/><path d="M7 12.5l4.5 4.5 8-8.5" fill="none" stroke="#fff" stroke-width="3.2"/></svg>
<div class="mt" style="left:805px;top:1054.0px;font-size:18px;letter-spacing:-0.4px">项目 STA70_2022_11_26_V15.1(1) 已成功保存。</div>
<div class="mt" style="left:1718px;top:1054.0px;font-size:18px;letter-spacing:-0.2px">2023/3/5</div>
<div class="a" style="left:729px;top:1077.5px;width:1076px;height:27px;background:#e0e0e0;"></div>
<div class="a" style="left:729px;top:1104.5px;width:1076px;height:1.5px;background:#fbfbfb;"></div>
<svg style="left:736px;top:1079.5px" width="26" height="26" viewBox="0 0 26 26"><circle cx="13" cy="12.5" r="12" fill="#0a1ee8"/><text x="9.5" y="20.5" font-size="17" font-weight="bold" font-family="Liberation Serif" fill="#fff">i</text></svg>
<svg style="left:778px;top:1086.5px" width="16" height="12" viewBox="0 0 16 12"><path d="M1 1h13L7.5 9z" fill="#111"/></svg>
<div class="mt" style="left:805px;top:1082.5px;font-size:18px;letter-spacing:-0.4px">开始从设备中上传</div>
<div class="mt" style="left:1718px;top:1082.5px;font-size:18px;letter-spacing:-0.2px">2023/3/5</div>
<div class="a" style="left:729px;top:1133.0px;width:1076px;height:1.5px;background:#fbfbfb;"></div>
<svg style="left:736px;top:1108.0px" width="26" height="26" viewBox="0 0 26 26"><circle cx="13" cy="12.5" r="12" fill="#0a1ee8"/><path d="M7 12.5l4.5 4.5 8-8.5" fill="none" stroke="#fff" stroke-width="3.2"/></svg>
<svg style="left:805px;top:1115.0px" width="16" height="12" viewBox="0 0 16 12"><path d="M1 1h13L7.5 9z" fill="#111"/></svg>
<div class="mt" style="left:833px;top:1111.0px;font-size:18px;letter-spacing:-0.4px">MCP01-PLC01</div>
<div class="mt" style="left:1718px;top:1111.0px;font-size:18px;letter-spacing:-0.2px">2023/3/5</div>
<div class="a" style="left:729px;top:1161.5px;width:1076px;height:1.5px;background:#fbfbfb;"></div>
<svg style="left:736px;top:1136.5px" width="26" height="26" viewBox="0 0 26 26"><circle cx="13" cy="12.5" r="12" fill="#0a1ee8"/><path d="M7 12.5l4.5 4.5 8-8.5" fill="none" stroke="#fff" stroke-width="3.2"/></svg>
<div class="mt" style="left:860px;top:1139.5px;font-size:18px;letter-spacing:-0.4px">STA70-1-8713-OP20-JIG01-PM02 下载成功。</div>
<div class="mt" style="left:1718px;top:1139.5px;font-size:18px;letter-spacing:-0.2px">2023/3/5</div>
<div class="a" style="left:729px;top:1190.0px;width:1076px;height:1.5px;background:#fbfbfb;"></div>
<svg style="left:736px;top:1165.0px" width="26" height="26" viewBox="0 0 26 26"><circle cx="13" cy="12.5" r="12" fill="#0a1ee8"/><path d="M7 12.5l4.5 4.5 8-8.5" fill="none" stroke="#fff" stroke-width="3.2"/></svg>
<div class="mt" style="left:805px;top:1168.0px;font-size:18px;letter-spacing:-0.4px">从设备中上传已完成（错误：0；警告：0）。</div>
<div class="mt" style="left:1718px;top:1168.0px;font-size:18px;letter-spacing:-0.2px">2023/3/5</div>
<div class="a" style="left:729px;top:1191.5px;width:1076px;height:27px;background:#e0e0e0;"></div>
<div class="a" style="left:729px;top:1218.5px;width:1076px;height:1.5px;background:#fbfbfb;"></div>
<svg style="left:736px;top:1193.5px" width="26" height="26" viewBox="0 0 26 26"><circle cx="13" cy="12.5" r="12" fill="#0a1ee8"/><text x="9.5" y="20.5" font-size="17" font-weight="bold" font-family="Liberation Serif" fill="#fff">i</text></svg>
<svg style="left:778px;top:1200.5px" width="16" height="12" viewBox="0 0 16 12"><path d="M1 1h13L7.5 9z" fill="#111"/></svg>
<div class="mt" style="left:805px;top:1196.5px;font-size:18px;letter-spacing:-0.4px">开始从设备中上传</div>
<div class="mt" style="left:1718px;top:1196.5px;font-size:18px;letter-spacing:-0.2px">2023/3/5</div>
<div class="a" style="left:729px;top:1247.0px;width:1076px;height:1.5px;background:#fbfbfb;"></div>
<svg style="left:736px;top:1222.0px" width="26" height="26" viewBox="0 0 26 26"><circle cx="13" cy="12.5" r="12" fill="#0a1ee8"/><path d="M7 12.5l4.5 4.5 8-8.5" fill="none" stroke="#fff" stroke-width="3.2"/></svg>
<svg style="left:805px;top:1229.0px" width="16" height="12" viewBox="0 0 16 12"><path d="M1 1h13L7.5 9z" fill="#111"/></svg>
<div class="mt" style="left:833px;top:1225.0px;font-size:18px;letter-spacing:-0.4px">MCP01-PLC01</div>
<div class="mt" style="left:1718px;top:1225.0px;font-size:18px;letter-spacing:-0.2px">2023/3/5</div>
<div class="a" style="left:729px;top:1275.5px;width:1076px;height:1.5px;background:#fbfbfb;"></div>
<svg style="left:736px;top:1250.5px" width="26" height="26" viewBox="0 0 26 26"><circle cx="13" cy="12.5" r="12" fill="#0a1ee8"/><path d="M7 12.5l4.5 4.5 8-8.5" fill="none" stroke="#fff" stroke-width="3.2"/></svg>
<div class="mt" style="left:860px;top:1253.5px;font-size:18px;letter-spacing:-0.4px">STA70-1-8713-OP20-JIG01-PM01 下载成功。</div>
<div class="mt" style="left:1718px;top:1253.5px;font-size:18px;letter-spacing:-0.2px">2023/3/5</div>
<div class="a" style="left:729px;top:1277.0px;width:1076px;height:27px;background:#d3d8de;"></div>
<div class="a" style="left:729px;top:1277.0px;width:40px;height:27px;border:1.5px dotted #777"></div>
<div class="a" style="left:729px;top:1304.0px;width:1076px;height:1.5px;background:#fbfbfb;"></div>
<svg style="left:736px;top:1279.0px" width="26" height="26" viewBox="0 0 26 26"><circle cx="13" cy="12.5" r="12" fill="#0a1ee8"/><path d="M7 12.5l4.5 4.5 8-8.5" fill="none" stroke="#fff" stroke-width="3.2"/></svg>
<div class="mt" style="left:805px;top:1282.0px;font-size:18px;letter-spacing:-0.4px">从设备中上传已完成（错误：0；警告：0）。</div>
<div class="mt" style="left:1718px;top:1282.0px;font-size:18px;letter-spacing:-0.2px">2023/3/5</div>
<div class="a" style="left:1805px;top:991px;width:27px;height:319px;background:#c4c4c4;"></div>
<div class="a" style="left:1806px;top:993px;width:25px;height:27px;border:2px solid #fdfdfd;box-shadow:0 0 0 1px #a4a4a4;background:#e6e6e6"></div>
<svg style="left:1810px;top:1000px" width="18" height="12" viewBox="0 0 18 12"><path d="M2 10l7-7 7 7" fill="none" stroke="#555" stroke-width="2.5"/></svg>
<div class="a" style="left:1806px;top:1228px;width:25px;height:27px;border:2px solid #fdfdfd;box-shadow:0 0 0 1px #a4a4a4;background:#e6e6e6"></div>
<div class="a" style="left:1812px;top:1236px;width:13px;height:2px;background:#666;"></div>
<div class="a" style="left:1812px;top:1240px;width:13px;height:2px;background:#666;"></div>
<div class="a" style="left:1812px;top:1244px;width:13px;height:2px;background:#666;"></div>
<div class="a" style="left:1806px;top:1281px;width:25px;height:27px;border:2px solid #fdfdfd;box-shadow:0 0 0 1px #a4a4a4;background:#e6e6e6"></div>
<svg style="left:1810px;top:1289px" width="18" height="12" viewBox="0 0 18 12"><path d="M2 2l7 7 7-7" fill="none" stroke="#555" stroke-width="2.5"/></svg>
<div class="a" style="left:727px;top:1310px;width:1105px;height:27px;background:#c4c4c4;"></div>
<div class="a" style="left:727px;top:1309px;width:1078px;height:2px;background:#a8a8a8;"></div>
<div class="a" style="left:730px;top:1312px;width:25px;height:25px;border:2px solid #fdfdfd;box-shadow:0 0 0 1px #a4a4a4;background:#e6e6e6"></div>
<svg style="left:735px;top:1316px" width="14" height="18" viewBox="0 0 14 18"><path d="M10 2L3 9l7 7" fill="none" stroke="#555" stroke-width="2.5"/></svg>
<div class="a" style="left:757px;top:1312px;width:965px;height:25px;border:2px solid #fdfdfd;box-shadow:0 0 0 1px #a4a4a4;background:linear-gradient(#f2f2f2,#dadada)"></div>
<div class="a" style="left:1235px;top:1316px;width:2px;height:17px;background:#777;"></div>
<div class="a" style="left:1239px;top:1316px;width:2px;height:17px;background:#777;"></div>
<div class="a" style="left:1243px;top:1316px;width:2px;height:17px;background:#777;"></div>
<div class="a" style="left:1778px;top:1312px;width:25px;height:25px;border:2px solid #fdfdfd;box-shadow:0 0 0 1px #a4a4a4;background:#e6e6e6"></div>
<svg style="left:1783px;top:1316px" width="14" height="18" viewBox="0 0 14 18"><path d="M3 2l7 7-7 7" fill="none" stroke="#555" stroke-width="2.5"/></svg>
<div class="a" style="left:1836px;top:111px;width:687px;height:35px;background:#b0b0b0;"></div>
<div class="t" style="left:1846px;top:117px;font-size:22.5px;color:#fafafa;">任务</div>
<svg style="left:2443px;top:120px" width="20" height="20" viewBox="0 0 20 20"><rect x="6" y="1" width="12" height="11" fill="#fff"/><rect x="1" y="6" width="12" height="12" fill="#fff" stroke="#b0b0b0"/></svg>
<svg style="left:2471px;top:120px" width="18" height="20" viewBox="0 0 18 20"><rect x="1" y="1" width="15" height="17" fill="none" stroke="#e4e4e4" stroke-width="1.5"/><path d="M5 1v17M9 1v17M12 1v17" stroke="#e4e4e4"/></svg>
<svg style="left:2500px;top:118px" width="14" height="22" viewBox="0 0 14 22"><path d="M2 2l10 9-10 9z" fill="#fff"/></svg>
<div class="a" style="left:1836px;top:146px;width:687px;height:42px;background:linear-gradient(#e8e8e8,#f8f8f8 30%,#eeeeee 60%,#dedede);"></div>
<div class="t" style="left:1846px;top:157px;font-size:22.5px;color:#000;font-weight:bold">选项</div>
<div class="a" style="left:1836px;top:187px;width:687px;height:2px;background:#8e8e8e;"></div>
<div class="a" style="left:1836px;top:189px;width:687px;height:40px;background:#eaeaea;"></div>
<svg style="left:2492px;top:196px" width="24" height="24" viewBox="0 0 24 24"><rect x="1" y="1" width="21" height="20" fill="#eef0ff" stroke="#8898e0" stroke-width="1.5"/><rect x="1" y="1" width="21" height="4" fill="#d8dcf4"/><path d="M1 20h21" stroke="#6070d0" stroke-width="2"/></svg>
<div class="a" style="left:1836px;top:229px;width:687px;height:4px;background:#a6a6a6;"></div>
<div class="a" style="left:1836px;top:233px;width:687px;height:32px;background:linear-gradient(#f0f0f0,#e6e6e6 45%,#d8d8d8 55%,#dcdcdc);"></div>
<div class="a" style="left:1866px;top:233px;width:2px;height:32px;background:#bcbcbc;"></div>
<div class="a" style="left:1836px;top:264px;width:687px;height:1.5px;background:#9c9c9c;"></div>
<svg style="left:1842px;top:242px" width="18" height="12" viewBox="0 0 18 12"><path d="M2 2l7 7 7-7" fill="none" stroke="#111" stroke-width="2.8"/></svg>
<div class="t" style="left:1873px;top:237px;font-size:22.5px;color:#000;font-weight:bold">查找和替换</div>
<div class="a" style="left:1836px;top:265px;width:687px;height:1038px;background:#e9e9e9;"></div>
<div class="t" style="left:1858px;top:295px;font-size:19.5px;color:#8c8c8c;">查找：</div>
<div class="a" style="left:1854px;top:320px;width:652px;height:27px;background:#ececec;border:2px solid #8e8e8e"></div>
<div class="cb" style="left:1855px;top:363px"></div>
<div class="gl" style="left:1883px;top:364px">全字匹配</div>
<div class="cb" style="left:1855px;top:399px"></div>
<div class="gl" style="left:1883px;top:400px">区分大小写</div>
<div class="cb" style="left:1855px;top:435px"></div>
<div class="gl" style="left:1883px;top:436px">在子结构中查找</div>
<div class="cb" style="left:1855px;top:471px"></div>
<div class="gl" style="left:1883px;top:472px">在隐藏文本中查找</div>
<div class="cb" style="left:1855px;top:507px"></div>
<div class="gl" style="left:1883px;top:508px">使用通配符</div>
<div class="cb" style="left:1855px;top:543px"></div>
<div class="gl" style="left:1883px;top:544px">使用正则表达式</div>
<div class="rb" style="left:1855px;top:591px"></div>
<div class="a" style="left:1861px;top:597px;width:9px;height:9px;border-radius:50%;background:#a0a0a0"></div>
<div class="gl" style="left:1882px;top:592px">向下</div>
<div class="rb" style="left:1855px;top:627px"></div>
<div class="gl" style="left:1882px;top:628px">向上</div>
<div class="rb" style="left:1855px;top:787px"></div>
<div class="a" style="left:1861px;top:793px;width:9px;height:9px;border-radius:50%;background:#a0a0a0"></div>
<div class="gl" style="left:1882px;top:788px">整个文档</div>
<div class="rb" style="left:1855px;top:823px"></div>
<div class="gl" style="left:1882px;top:824px">从当前位置开始</div>
<div class="rb" style="left:1855px;top:859px"></div>
<div class="gl" style="left:1882px;top:860px">选择</div>
<div class="btn" style="left:1855px;top:659px;width:278px;height:29px"></div>
<div class="t" style="left:1975px;top:663px;font-size:19.5px;color:#8c8c8c;">查找</div>
<div class="t" style="left:1858px;top:718px;font-size:19.5px;color:#8c8c8c;">替换为：</div>
<div class="a" style="left:1855px;top:746px;width:650px;height:27px;background:#ececec;border:2px solid #9a9a9a"></div>
<div class="a" style="left:2480px;top:747px;width:24px;height:25px;background:linear-gradient(#f4f4f4,#e2e2e2);border-left:1.5px solid #b8b8b8"></div>
<svg style="left:2486px;top:755px" width="14" height="10" viewBox="0 0 14 10"><path d="M1 1h12L7 8z" fill="#777"/></svg>
<div class="btn" style="left:1855px;top:893px;width:134px;height:29px"></div>
<div class="t" style="left:1902px;top:897px;font-size:19.5px;color:#8c8c8c;">替换</div>
<div class="btn" style="left:1999px;top:893px;width:134px;height:29px"></div>
<div class="t" style="left:2027px;top:897px;font-size:19.5px;color:#8c8c8c;">全部替换</div>
<div class="a" style="left:1836px;top:1299px;width:687px;height:4px;background:#a6a6a6;"></div>
<div class="a" style="left:1836px;top:1303px;width:687px;height:34px;background:linear-gradient(#f0f0f0,#e6e6e6 45%,#d8d8d8 55%,#dcdcdc);"></div>
<div class="a" style="left:1866px;top:1303px;width:2px;height:34px;background:#bcbcbc;"></div>
<svg style="left:1842px;top:1311px" width="14" height="18" viewBox="0 0 14 18"><path d="M3 2l7 7-7 7" fill="none" stroke="#111" stroke-width="2.8"/></svg>
<div class="t" style="left:1873px;top:1307px;font-size:22.5px;color:#000;font-weight:bold">语言和资源</div>
<div class="a" style="left:2523px;top:111px;width:3px;height:1226px;background:#1d2130;"></div>
<div class="a" style="left:2526px;top:111px;width:34px;height:1226px;background:#b0b0b0;"></div>
<div class="a" style="left:2525px;top:156px;width:31px;height:111px;border:1.5px solid #c8c8c8;background:#ececec"></div>
<svg style="left:2529px;top:161px" width="24" height="24" viewBox="0 0 24 24"><rect x="2" y="3" width="15" height="19" fill="#f4f4ff" stroke="#c89830" stroke-width="1.5"/><rect x="6" y="1" width="7" height="4" fill="#ccc"/><path d="M5 8h9M5 11h9M5 14h7" stroke="#1a2468" stroke-width="1.6"/><path d="M10 16l4 4 8-9" fill="none" stroke="#20a030" stroke-width="3"/></svg>
<div class="t" style="left:2518px;top:201px;width:46px;height:22px;text-align:center;font-size:22px;color:#111;-webkit-text-stroke:0.4px #111;transform:rotate(90deg);transform-origin:23px 11px">任务</div>
<div class="a" style="left:2525px;top:270px;width:31px;height:87px;border:1.5px solid #c8c8c8;background:#e4e4e4"></div>
<svg style="left:2529px;top:275px" width="24" height="22" viewBox="0 0 24 22"><path d="M2 3h9v16H2z M13 3h9v16h-9z" fill="#f4f6ff" stroke="#1a2ae0" stroke-width="2"/><path d="M2 19h20" stroke="#1a2068" stroke-width="2.5"/></svg>
<div class="t" style="left:2518px;top:303px;width:46px;height:22px;text-align:center;font-size:22px;color:#888;transform:rotate(90deg);transform-origin:23px 11px">库</div>
<div class="a" style="left:0px;top:1337px;width:2560px;height:43px;background:#1b1b1b;"></div>
<div class="a" style="left:0px;top:1380px;width:2560px;height:8px;background:#000;"></div>
<div class="a" style="left:0px;top:1388px;width:2560px;height:4px;background:#f0f0f0;"></div>
<svg style="left:52px;top:1349px" width="12" height="20" viewBox="0 0 12 20"><path d="M10 1L1 10l9 9z" fill="#fff"/></svg>
<div class="t" style="left:80px;top:1347px;font-size:21.5px;color:#fafafa;-webkit-text-stroke:0.5px #fafafa;letter-spacing:0.2px">Portal</div>
<div class="t" style="left:145px;top:1347px;font-size:22px;color:#fafafa;font-weight:bold">视图</div>
<div class="a" style="left:272px;top:1342px;width:169px;height:32px;background:#ffffff;"></div>
<svg style="left:276px;top:1346px" width="24" height="24" viewBox="0 0 24 24"><rect x="1" y="1" width="21" height="21" fill="#eef0fa" stroke="#1c3a80" stroke-width="1.5"/><rect x="1" y="1" width="21" height="4" fill="#1c3a80"/><path d="M4 9h4M10 9h4M16 9h4M4 13h4M10 13h4M16 13h4M4 17h4M10 17h4M16 17h4" stroke="#e08000" stroke-width="2"/><path d="M8 6v16" stroke="#1c3a80"/></svg>
<div class="t" style="left:306px;top:1346px;font-size:22px;color:#111;font-weight:bold">总览</div>
<div class="a" style="left:0px;top:1392px;width:2560px;height:48px;background:#223540;"></div>
<svg style="left:23px;top:1398px" width="26" height="26" viewBox="0 0 26 26"><path d="M1 4l10-1.5V12H1zM12.5 2.2L25 0.5V12H12.5zM1 13.5h10V23L1 21.5zM12.5 13.5H25V25l-12.5-1.8z" fill="#fff"/></svg>
<div class="a" style="left:72px;top:1392px;width:431px;height:48px;background:#f0f0f0;"></div>
<div class="a" style="left:72px;top:1392px;width:2px;height:48px;background:#c8c8c8;"></div>
<svg style="left:89px;top:1398px" width="28" height="28" viewBox="0 0 28 28"><circle cx="16" cy="10" r="7.5" fill="none" stroke="#111" stroke-width="1.8"/><path d="M10.5 15.5L2 24" stroke="#111" stroke-width="2"/></svg>
<div class="t" style="left:131px;top:1399px;font-size:26px;color:#111;">搜索</div>
<svg style="left:388px;top:1392px" width="110" height="48" viewBox="0 0 110 48"><path d="M12 2l22 44" stroke="#e0b070" stroke-width="4"/><ellipse cx="14" cy="6" rx="8" ry="6" fill="#f0c890"/><path d="M96 2l-22 44" stroke="#e0b070" stroke-width="4"/><ellipse cx="96" cy="6" rx="8" ry="6" fill="#f0c890"/><ellipse cx="55" cy="24" rx="28" ry="22" fill="#88c040"/><circle cx="45" cy="18" r="10" fill="#e84830"/><circle cx="62" cy="32" r="10" fill="#e03828"/><ellipse cx="60" cy="12" rx="7" ry="9" fill="#e8d0f0" stroke="#a070b0"/><ellipse cx="48" cy="38" rx="8" ry="5" fill="#e8d0f0" stroke="#a070b0"/></svg>
<svg style="left:527px;top:1398px" width="26" height="28" viewBox="0 0 26 28"><path d="M2 4h2M2 24h2M2 4v20M22 4h-18M22 24h-18" fill="none" stroke="#fff" stroke-width="1.6"/><rect x="4" y="7" width="15" height="14" fill="none" stroke="#fff" stroke-width="1.6"/><path d="M24 2v25" stroke="#fff" stroke-width="1.6"/><rect x="22.5" y="12" width="3" height="4" fill="#fff"/></svg>
<svg style="left:598px;top:1395px" width="38" height="36" viewBox="0 0 38 36"><defs><linearGradient id="eg" x1="0" y1="0" x2="1" y2="1"><stop offset="0" stop-color="#38c8f0"/><stop offset="0.5" stop-color="#1a8ae0"/><stop offset="1" stop-color="#0c4aa8"/></linearGradient></defs><circle cx="18" cy="18" r="17" fill="url(#eg)"/><path d="M30 14c-2-6-8-9-14-8 8 0 12 5 12 9-4-3-14-3-14 5 0 5 6 8 12 7-8 3-18 0-20-8" fill="#5ee08a" opacity="0.9"/><circle cx="18" cy="21" r="6" fill="#0c3a88"/></svg>
<svg style="left:672px;top:1398px" width="38" height="36" viewBox="0 0 38 36"><rect x="2" y="6" width="34" height="28" rx="3" fill="#f4f4f4"/><path d="M10 6V2h18v4" fill="none" stroke="#2aa8e8" stroke-width="2.5"/><rect x="11" y="13" width="7" height="7" fill="#f25022"/><rect x="20" y="13" width="7" height="7" fill="#7fba00"/><rect x="11" y="22" width="7" height="7" fill="#00a4ef"/><rect x="20" y="22" width="7" height="7" fill="#ffb900"/></svg>
<svg style="left:747px;top:1398px" width="40" height="36" viewBox="0 0 40 36"><path d="M2 12L20 1l18 11v21H2z" fill="#1a78d8"/><path d="M2 12l18 12 18-12" fill="#e8f4ff"/><path d="M2 33l18-12 18 12z" fill="#30b0f8"/></svg>
<div class="a" style="left:806px;top:1392px;width:72px;height:48px;background:#4a5a62;"></div>
<svg style="left:823px;top:1393px" width="36" height="38" viewBox="0 0 36 38"><rect x="0" y="0" width="36" height="38" fill="#3a4256"/><text x="2" y="17" font-size="18" font-weight="bold" fill="#f0f0f0" font-family="Liberation Sans">TIA</text><text x="0" y="35" font-size="15" font-weight="bold" fill="#98a8e8" font-family="Liberation Sans">V15.1</text></svg>
<div class="a" style="left:806px;top:1437px;width:72px;height:3px;background:#6cb8e8;"></div>
<div class="a" style="left:878px;top:1392px;width:4px;height:48px;background:#36464e;"></div>
<svg style="left:897px;top:1398px" width="36" height="30" viewBox="0 0 36 30"><path d="M1 2h13l3 3h18v24H1z" fill="#f6c440"/><path d="M1 8h34v21H1z" fill="#fcd860"/><rect x="9" y="18" width="18" height="11" fill="#2a7ee0"/><rect x="13" y="22" width="10" height="7" fill="#fcd860"/></svg>
<div class="a" style="left:886px;top:1437px;width:59px;height:3px;background:#6cb8e8;"></div>
<div class="a" style="left:586px;top:1437px;width:61px;height:3px;background:#6cb8e8;"></div>
<div class="a" style="left:945px;top:1392px;width:893px;height:48px;background:#efefef;"></div>
<div class="a" style="left:945px;top:1392px;width:3px;height:48px;background:#1d2130;"></div>
<div class="a" style="left:948px;top:1392px;width:35px;height:48px;background:#b4b4b4;"></div>
<div class="a" style="left:1040px;top:1392px;width:38px;height:48px;background:#b4b4b4;"></div>
<div class="a" style="left:983px;top:1409px;width:57px;height:2px;background:#fafafa;"></div>
<div class="a" style="left:1078px;top:1409px;width:632px;height:2px;background:#fafafa;"></div>
<div class="a" style="left:0;top:1392px;width:2560px;height:48px;overflow:hidden">
<svg style="left:1220px;top:-6px" width="18" height="16" viewBox="0 0 18 16"><path d="M1 0v10c0 3 3.5 4 7.5 4s7.5-1 7.5-4V0z" fill="#2a3ae8"/></svg>
<div class="t" style="left:1244px;top:-7px;font-size:18px;color:#222;letter-spacing:-0.4px">数据块_1 [DB7]</div>
<svg style="left:1193px;top:25px" width="14" height="10" viewBox="0 0 14 10"><path d="M1 1h12L7 8z" fill="#111"/></svg>
<svg style="left:1215px;top:19px" width="24" height="22"><defs><linearGradient id="fdg" x1="0" y1="0" x2="1" y2="1"><stop offset="0" stop-color="#fcd878"/><stop offset="0.45" stop-color="#fff2c4"/><stop offset="1" stop-color="#f8cc60"/></linearGradient></defs><path d="M1 1.5h7.5l2.5 3h11v16H1z" fill="url(#fdg)" stroke="#c8901e" stroke-width="1.4"/><rect x="5" y="5.5" width="4.5" height="3" rx="1" fill="#0a14f8"/><path d="M6.3 9.5V16.5H12M6.3 12.3H12" fill="none" stroke="#0a14f8" stroke-width="2"/><rect x="14" y="10" width="4.5" height="3" rx="1" fill="#0a14f8"/><rect x="14" y="14.5" width="4.5" height="3" rx="1" fill="#0a14f8"/></svg>
<div class="t" style="left:1244px;top:21px;font-size:18px;color:#222;letter-spacing:-0.3px">STA80-1</div>
</div>
<div class="a" style="left:1708px;top:1392px;width:2px;height:48px;background:#dadada;"></div>
<div class="a" style="left:1740px;top:1392px;width:2px;height:48px;background:#dadada;"></div>
<div class="a" style="left:1768px;top:1392px;width:22px;height:48px;background:linear-gradient(90deg,#d0d0d0,#e8e8e8);"></div>
<div class="a" style="left:1790px;top:1392px;width:5px;height:48px;background:#1d2130;"></div>
<div class="a" style="left:1795px;top:1392px;width:41px;height:48px;background:#ffffff;"></div>
<div class="a" style="left:1836px;top:1394px;width:3px;height:46px;background:#111;"></div>
<div class="a" style="left:1839px;top:1392px;width:658px;height:48px;background:#ffffff;"></div>
<div class="a" style="left:2497px;top:1392px;width:26px;height:48px;background:#c0c0c0;"></div>
<div class="a" style="left:2523px;top:1392px;width:4px;height:48px;background:#1d2130;"></div>
<div class="a" style="left:2527px;top:1392px;width:33px;height:48px;background:#f0f0f0;"></div>
<svg style="left:2538px;top:1400px" width="12" height="18" viewBox="0 0 12 18"><path d="M1 1l9 8-9 8z" fill="#111"/></svg>
<svg style="left:2538px;top:1428px" width="12" height="14" viewBox="0 0 12 14"><path d="M1 1l9 8-9 8z" fill="#111"/></svg>
<div class="a" style="left:2374px;top:331px;width:150px;height:60px;border-radius:30px 0 0 30px;background:#2c3240"></div>
<div class="a" style="left:2380px;top:361px;width:110px;height:1px;background:#3a4050;"></div>
<svg style="left:2390px;top:338px" width="12" height="14" viewBox="0 0 12 14"><path d="M6 13V3M2 7l4-4 4 4" fill="none" stroke="#3aa8f0" stroke-width="2"/></svg>
<div class="t" style="left:2408px;top:338px;font-size:17px;color:#f0f0f0;font-weight:bold">0.2</div>
<div class="t" style="left:2434px;top:342px;font-size:13px;color:#c0c4cc;">K/s</div>
<div class="t" style="left:2434px;top:372px;font-size:13px;color:#c0c4cc;">K/s</div>
<svg style="left:2460px;top:316px" width="92" height="92"><circle cx="46" cy="46" r="45" fill="#4a5060"/><circle cx="46" cy="46" r="41" fill="#545a6a"/><path d="M46 9 A37 37 0 0 1 83 46" fill="none" stroke="#38d0b8" stroke-width="2.5"/><path d="M83 46 A37 37 0 0 1 46 83" fill="none" stroke="#90d060" stroke-width="2.5"/><path d="M46 83 A37 37 0 0 1 12 60" fill="none" stroke="#e8c040" stroke-width="2.5"/><path d="M12 60 A37 37 0 0 1 16 26" fill="none" stroke="#f07a40" stroke-width="2.5"/><text x="16" y="58" font-size="34" fill="#f4f4f4" font-family="Liberation Sans">82</text><text x="63" y="62" font-size="15" fill="#f4f4f4" font-family="Liberation Sans">%</text></svg>
<div class="a" style="left:2198px;top:368px;width:231px;height:38px;background:#fbfbff;border:1px solid #c8d8f0;border-radius:2px"></div>
<div class="a" style="left:2396px;top:369px;width:32px;height:36px;background:linear-gradient(90deg,#e0f4f8,#f0e8ff);"></div>
<svg style="left:2161px;top:360px" width="50" height="48"><path d="M6 10 Q4 4 12 3 L40 1 Q46 1 46 8 L47 36 Q47 44 40 44 L12 46 Q5 47 5 40z" fill="#f05a28"/><path d="M36 13c-4-3-18-3-19 3-1 6 16 4 15 11-1 6-16 6-20 2" fill="none" stroke="#fff" stroke-width="6"/></svg>
<div class="t" style="left:2218px;top:371px;font-size:28px;color:#1a6ae0;">A</div>
<svg style="left:2255px;top:376px" width="26" height="22" viewBox="0 0 26 22"><circle cx="5" cy="5" r="2.5" fill="#1a6ae0"/><path d="M16 9c3 0 3 7-2 10" fill="none" stroke="#1a6ae0" stroke-width="3"/><circle cx="15" cy="10" r="3" fill="#1a6ae0"/></svg>
<svg style="left:2290px;top:372px" width="22" height="30" viewBox="0 0 22 30"><rect x="7" y="2" width="9" height="17" rx="4.5" fill="#1a6ae0"/><path d="M3 13c0 6 4 9 8.5 9s8.5-3 8.5-9M11.5 22v5M7 27h9" fill="none" stroke="#1a6ae0" stroke-width="2.2"/></svg>
<svg style="left:2325px;top:375px" width="26" height="22" viewBox="0 0 26 22"><rect x="1" y="3" width="24" height="16" rx="2" fill="#1a6ae0"/><path d="M4 7h2M8 7h2M12 7h2M16 7h2M20 7h2M4 11h2M8 11h2M12 11h2M16 11h2M20 11h2M7 15h12" stroke="#fff" stroke-width="2"/></svg>
<svg style="left:2358px;top:374px" width="30" height="26" viewBox="0 0 30 26"><path d="M9 2L1 7l3 6 4-2v13h14V11l4 2 3-6-8-5c-1 3-4 4-6 4S10 5 9 2z" fill="#1a6ae0"/></svg>
<svg style="left:2398px;top:373px" width="26" height="26" viewBox="0 0 26 26"><rect x="2" y="2" width="9" height="9" rx="2.5" fill="#8a6af0"/><rect x="14" y="2" width="9" height="9" rx="2.5" fill="#4aa0f8"/><rect x="2" y="14" width="9" height="9" rx="2.5" fill="#6a80f8"/><rect x="14" y="14" width="9" height="9" rx="2.5" fill="#b070f0"/></svg>
<div class="a" style="left:2028px;top:1053px;width:524px;height:320px;background:#fff;border:1.5px solid #8ccaf0"></div>
<div class="a" style="left:2029px;top:1054px;width:522px;height:66px;background:linear-gradient(90deg,#dcf0fc,#cdeefa 60%,#b6e6f8);"></div>
<svg style="left:2059px;top:1075px" width="28" height="30" viewBox="0 0 28 30"><path d="M3 5Q13 -1 24 5 Q25 20 13.5 27 Q2 20 3 5z" fill="none" stroke="#1a3ae8" stroke-width="2.6"/><path d="M7 9l6.5 7 7-7" fill="none" stroke="#1a3ae8" stroke-width="2.6"/></svg>
<div class="t" style="left:2089px;top:1081px;font-size:18.5px;color:#222;letter-spacing:-0.3px">腾讯电脑管家 - 安装提示</div>
<svg style="left:2451px;top:1073px" width="26" height="26" viewBox="0 0 26 26"><path d="M23.35,11.22 L23.35,14.78 L20.64,15.36 L20.10,16.69 L21.57,19.06 L19.06,21.57 L16.73,20.08 L15.41,20.63 L14.78,23.35 L11.22,23.35 L10.64,20.64 L9.31,20.10 L6.94,21.57 L4.43,19.06 L5.92,16.73 L5.37,15.41 L2.65,14.78 L2.65,11.22 L5.36,10.64 L5.90,9.31 L4.43,6.94 L6.94,4.43 L9.27,5.92 L10.59,5.37 L11.22,2.65 L14.78,2.65 L15.36,5.36 L16.69,5.90 L19.06,4.43 L21.57,6.94 L20.08,9.27 L20.63,10.59Z" fill="none" stroke="#8a8a8a" stroke-width="1.6" stroke-linejoin="round"/><circle cx="13" cy="13" r="3.8" fill="none" stroke="#8a8a8a" stroke-width="1.6"/></svg>
<svg style="left:2502px;top:1075px" width="20" height="20" viewBox="0 0 20 20"><path d="M1 1l18 18M19 1L1 19" stroke="#666" stroke-width="1.6"/></svg>
<svg style="left:2059px;top:1144px" width="62" height="58" viewBox="0 0 62 58"><defs><linearGradient id="fg" x1="0" y1="0" x2="1" y2="1"><stop offset="0" stop-color="#1a8af0"/><stop offset="1" stop-color="#38e0f8"/></linearGradient></defs><path d="M1 1h30v6h30v50H1z" fill="#60d0fc"/><rect x="1" y="13" width="60" height="44" fill="url(#fg)"/><rect x="27" y="24" width="7" height="5" fill="#c8f0ff"/><rect x="27" y="32" width="7" height="15" fill="#c8f0ff"/></svg>
<div class="t" style="left:2134px;top:1147px;font-size:24.5px;color:#111;letter-spacing:-0.9px">发现有软件安装，推荐开启安装提示</div>
<div class="t" style="left:2134px;top:1177px;font-size:24.5px;color:#111;">功能</div>
<div class="t" style="left:2059px;top:1231px;font-size:18.5px;color:#222;letter-spacing:-0.9px">每当软件安装时提示，有效预防不知情下被偷偷安装软件</div>
<div class="a" style="left:2063px;top:1320px;width:19px;height:19px;background:#fff;border:1.5px solid #c8c8c8"></div>
<div class="t" style="left:2090px;top:1320px;font-size:18.5px;color:#222;">不再提示</div>
<div class="a" style="left:2266px;top:1314px;width:120px;height:39px;background:#fff;border:1.5px solid #dcdcdc"></div>
<div class="t" style="left:2290px;top:1324px;font-size:18.5px;color:#222;">暂不开启</div>
<div class="a" style="left:2401px;top:1314px;width:120px;height:39px;background:#2350ea;border-radius:2px"></div>
<div class="t" style="left:2425px;top:1324px;font-size:18.5px;color:#fff;">立即开启</div>
<div class="t" style="left:1110px;top:771px;height:40px;font-size:41px;font-weight:bold;color:rgba(255,255,255,0.25);letter-spacing:1.5px;transform:rotate(-32deg);transform-origin:0 40px">西门子工业&nbsp;&nbsp;&nbsp;找答案</div>
<div class="t" style="left:1119px;top:816px;height:25px;font-size:25px;font-weight:bold;color:rgba(255,255,255,0.25);transform:rotate(-30.4deg);transform-origin:0 22.6px">support.industry.siemens.com/cs</div>
</body></html>
